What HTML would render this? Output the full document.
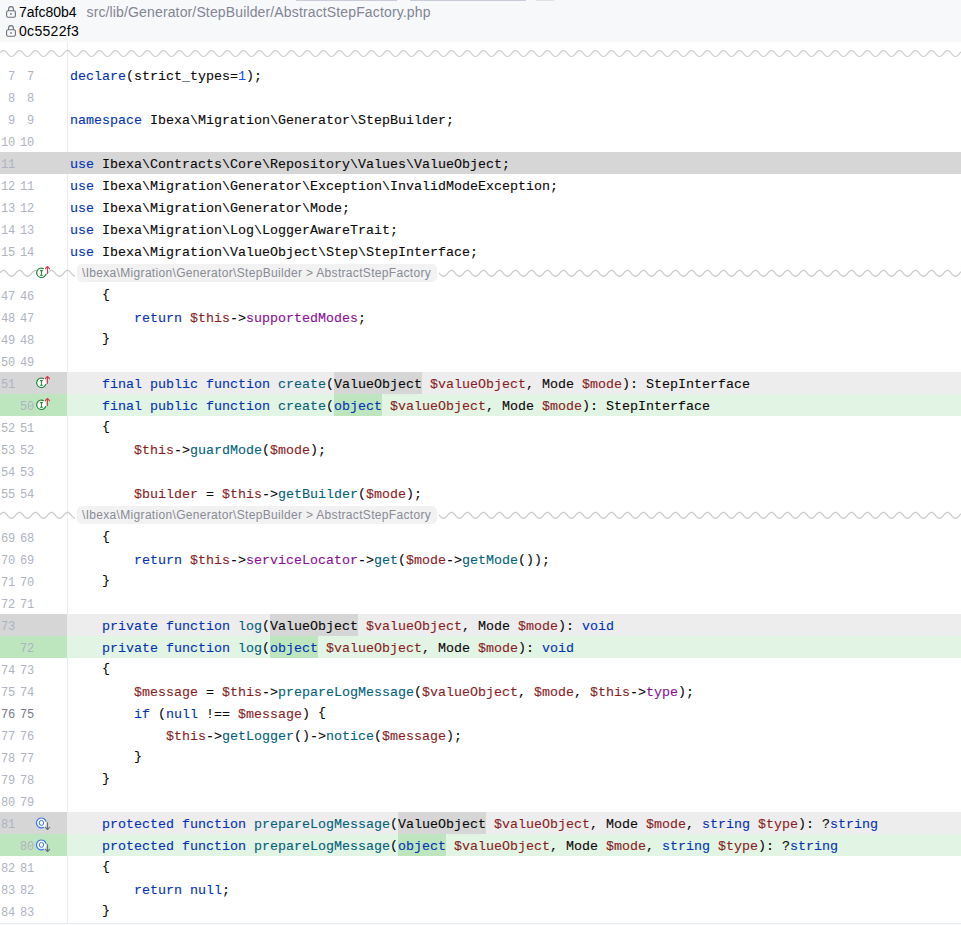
<!DOCTYPE html>
<html><head><meta charset="utf-8"><style>
*{box-sizing:border-box}
html,body{margin:0;padding:0;width:961px;height:925px;overflow:hidden;background:#fff}
body{position:relative;font-family:"Liberation Sans",sans-serif}
.hdr{position:absolute;left:0;top:0;width:961px;height:42px;background:#f7f8fa}
.bar{position:absolute;top:0;height:1px}
.lock{position:absolute;left:0}
.hash{position:absolute;left:19px;font-size:14px;color:#000;white-space:pre;line-height:18px}
.path{position:absolute;left:86.5px;top:3px;font-size:14px;color:#818594;letter-spacing:0.14px;white-space:pre;line-height:18px}
.gdiv{position:absolute;left:67px;top:42px;width:1px;height:881px;background:#ebecf0}
.bot{position:absolute;left:0;top:923px;width:961px;height:1px;background:#ebecf0}
.bot2{position:absolute;left:0;top:924px;width:961px;height:1px;background:#f7f8fa}
.wv{position:absolute;left:0;top:0}
.wv path{fill:none;stroke:#cbcbcb;stroke-width:1.2}
.lbl{position:absolute;left:77px;width:360px;height:18px;background:#f2f2f2;border-radius:5px;font-size:12px;color:#888b94;line-height:19px;padding-left:5px;letter-spacing:0.32px;white-space:pre}
.row{position:absolute;left:0;width:961px;height:22px}
.row.delfull{background:#d6d6d6}
.row.del{background:linear-gradient(to right,#d6d6d6 0,#d6d6d6 67px,#ededed 67px)}
.row.add{background:linear-gradient(to right,#bee6be 0,#bee6be 67px,#e2f4e3 67px)}
.ln{position:absolute;top:2px;font-family:"Liberation Mono",monospace;font-size:12px;letter-spacing:-0.2px;color:#aeb3c2;line-height:22px;width:14px;text-align:right;white-space:pre}
.l1{left:1px}
.l2{left:20px}
.ln.act{color:#767a8a}
.ic{position:absolute;left:32px;top:0}
.code{position:absolute;left:70px;top:2px;-webkit-text-stroke:0.1px currentColor;font-family:"Liberation Mono",monospace;font-size:13.333px;line-height:22px;color:#080808;white-space:pre}
.br{position:relative;top:-2px} .pa{position:relative;top:-1.5px}
.k{color:#0033b3} .f{color:#00627a} .fl{color:#871094} .v{color:#871e1e} .n{color:#1750eb}
.w{position:absolute;top:0;height:22px}
.del .w{background:#d6d6d6}
.add .w{background:#bee6be}
</style></head><body>
<div class="hdr">
<div class="bar" style="left:296px;width:101px;background:#c9ccd6"></div>
<div class="bar" style="left:410px;width:116px;background:#c9ccd6"></div>
<div class="bar" style="left:536px;width:18px;background:#dfe1e5"></div>
<div class="lock" style="top:0px"><svg width="20" height="20" viewBox="0 0 20 20"><path d="M8.6 11V9a2.4 2.4 0 0 1 4.8 0V11" fill="none" stroke="#6c707e" stroke-width="1.1"/><rect x="6.6" y="10.7" width="8.8" height="6.5" rx="1.5" fill="none" stroke="#6c707e" stroke-width="1.1"/><rect x="10.4" y="13" width="1.2" height="2" fill="#6c707e"/></svg></div>
<div class="hash" style="top:3px">7afc80b4</div>
<div class="path">src/lib/Generator/StepBuilder/AbstractStepFactory.php</div>
<div class="lock" style="top:19px"><svg width="20" height="20" viewBox="0 0 20 20"><path d="M8.6 11V9a2.4 2.4 0 0 1 4.8 0V11" fill="none" stroke="#6c707e" stroke-width="1.1"/><rect x="6.6" y="10.7" width="8.8" height="6.5" rx="1.5" fill="none" stroke="#6c707e" stroke-width="1.1"/><rect x="10.4" y="13" width="1.2" height="2" fill="#6c707e"/></svg></div>
<div class="hash" style="top:22px;letter-spacing:0.3px">0c5522f3</div>
</div>
<div class="gdiv"></div>
<div class="row" style="top:64px"><span class="ln l1">7</span><span class="ln l2">7</span><div class="code"><span class="k">declare</span><span class="pa">(</span>strict_types=<span class="n">1</span><span class="pa">)</span>;</div></div><div class="row" style="top:86px"><span class="ln l1">8</span><span class="ln l2">8</span><div class="code"></div></div><div class="row" style="top:108px"><span class="ln l1">9</span><span class="ln l2">9</span><div class="code"><span class="k">namespace</span> Ibexa\Migration\Generator\StepBuilder;</div></div><div class="row" style="top:130px"><span class="ln l1">10</span><span class="ln l2">10</span><div class="code"></div></div><div class="row delfull" style="top:152px"><span class="ln l1">11</span><span class="ln l2"></span><div class="code"><span class="k">use</span> Ibexa\Contracts\Core\Repository\Values\ValueObject;</div></div><div class="row" style="top:174px"><span class="ln l1">12</span><span class="ln l2">11</span><div class="code"><span class="k">use</span> Ibexa\Migration\Generator\Exception\InvalidModeException;</div></div><div class="row" style="top:196px"><span class="ln l1">13</span><span class="ln l2">12</span><div class="code"><span class="k">use</span> Ibexa\Migration\Generator\Mode;</div></div><div class="row" style="top:218px"><span class="ln l1">14</span><span class="ln l2">13</span><div class="code"><span class="k">use</span> Ibexa\Migration\Log\LoggerAwareTrait;</div></div><div class="row" style="top:240px"><span class="ln l1">15</span><span class="ln l2">14</span><div class="code"><span class="k">use</span> Ibexa\Migration\ValueObject\Step\StepInterface;</div></div><div class="row" style="top:284px"><span class="ln l1">47</span><span class="ln l2">46</span><div class="code">    <span class="br">{</span></div></div><div class="row" style="top:306px"><span class="ln l1">48</span><span class="ln l2">47</span><div class="code">        <span class="k">return</span> <span class="v">$this</span>-&gt;<span class="fl">supportedModes</span>;</div></div><div class="row" style="top:328px"><span class="ln l1">49</span><span class="ln l2">48</span><div class="code">    <span class="br">}</span></div></div><div class="row" style="top:350px"><span class="ln l1">50</span><span class="ln l2">49</span><div class="code"></div></div><div class="row del" style="top:372px"><span class="ln l1">51</span><span class="ln l2"></span><svg class="ic" width="20" height="22" viewBox="0 0 20 22"><circle cx="9.4" cy="10.8" r="4.7" fill="#fff" stroke="none"/><path d="M11.82 6.77A4.7 4.7 0 1 0 13.96 11.94" fill="none" stroke="#208a3c" stroke-width="1.15"/><path d="M8.1 8.65h2.7M8.1 13.25h2.7" stroke="#208a3c" stroke-width="1.15" fill="none"/><path d="M9.45 8.6v4.7" stroke="#208a3c" stroke-width="1.0" fill="none"/><path d="M15.45 4.6v7.3" stroke="#db3b4b" stroke-width="1.15" fill="none"/><path d="M13.4 6.7l2.05-2.2 2.05 2.2" stroke="#db3b4b" stroke-width="1.15" fill="none" stroke-linecap="round" stroke-linejoin="round"/></svg><div class="w" style="left:334px;width:88px"></div><div class="code">    <span class="k">final</span> <span class="k">public</span> <span class="k">function</span> <span class="f">create</span><span class="pa">(</span>ValueObject <span class="v">$valueObject</span>, Mode <span class="v">$mode</span><span class="pa">)</span>: StepInterface</div></div><div class="row add" style="top:394px"><span class="ln l1"></span><span class="ln l2">50</span><svg class="ic" width="20" height="22" viewBox="0 0 20 22"><circle cx="9.4" cy="10.8" r="4.7" fill="#fff" stroke="none"/><path d="M11.82 6.77A4.7 4.7 0 1 0 13.96 11.94" fill="none" stroke="#208a3c" stroke-width="1.15"/><path d="M8.1 8.65h2.7M8.1 13.25h2.7" stroke="#208a3c" stroke-width="1.15" fill="none"/><path d="M9.45 8.6v4.7" stroke="#208a3c" stroke-width="1.0" fill="none"/><path d="M15.45 4.6v7.3" stroke="#db3b4b" stroke-width="1.15" fill="none"/><path d="M13.4 6.7l2.05-2.2 2.05 2.2" stroke="#db3b4b" stroke-width="1.15" fill="none" stroke-linecap="round" stroke-linejoin="round"/></svg><div class="w" style="left:334px;width:48px"></div><div class="code">    <span class="k">final</span> <span class="k">public</span> <span class="k">function</span> <span class="f">create</span><span class="pa">(</span><span class="k">object</span> <span class="v">$valueObject</span>, Mode <span class="v">$mode</span><span class="pa">)</span>: StepInterface</div></div><div class="row" style="top:416px"><span class="ln l1">52</span><span class="ln l2">51</span><div class="code">    <span class="br">{</span></div></div><div class="row" style="top:438px"><span class="ln l1">53</span><span class="ln l2">52</span><div class="code">        <span class="v">$this</span>-&gt;<span class="f">guardMode</span><span class="pa">(</span><span class="v">$mode</span><span class="pa">)</span>;</div></div><div class="row" style="top:460px"><span class="ln l1">54</span><span class="ln l2">53</span><div class="code"></div></div><div class="row" style="top:482px"><span class="ln l1">55</span><span class="ln l2">54</span><div class="code">        <span class="v">$builder</span> = <span class="v">$this</span>-&gt;<span class="f">getBuilder</span><span class="pa">(</span><span class="v">$mode</span><span class="pa">)</span>;</div></div><div class="row" style="top:526px"><span class="ln l1">69</span><span class="ln l2">68</span><div class="code">    <span class="br">{</span></div></div><div class="row" style="top:548px"><span class="ln l1">70</span><span class="ln l2">69</span><div class="code">        <span class="k">return</span> <span class="v">$this</span>-&gt;<span class="fl">serviceLocator</span>-&gt;<span class="f">get</span><span class="pa">(</span><span class="v">$mode</span>-&gt;<span class="f">getMode</span><span class="pa">(</span><span class="pa">)</span><span class="pa">)</span>;</div></div><div class="row" style="top:570px"><span class="ln l1">71</span><span class="ln l2">70</span><div class="code">    <span class="br">}</span></div></div><div class="row" style="top:592px"><span class="ln l1">72</span><span class="ln l2">71</span><div class="code"></div></div><div class="row del" style="top:614px"><span class="ln l1">73</span><span class="ln l2"></span><div class="w" style="left:270px;width:88px"></div><div class="code">    <span class="k">private</span> <span class="k">function</span> <span class="f">log</span><span class="pa">(</span>ValueObject <span class="v">$valueObject</span>, Mode <span class="v">$mode</span><span class="pa">)</span>: <span class="k">void</span></div></div><div class="row add" style="top:636px"><span class="ln l1"></span><span class="ln l2">72</span><div class="w" style="left:270px;width:48px"></div><div class="code">    <span class="k">private</span> <span class="k">function</span> <span class="f">log</span><span class="pa">(</span><span class="k">object</span> <span class="v">$valueObject</span>, Mode <span class="v">$mode</span><span class="pa">)</span>: <span class="k">void</span></div></div><div class="row" style="top:658px"><span class="ln l1">74</span><span class="ln l2">73</span><div class="code">    <span class="br">{</span></div></div><div class="row" style="top:680px"><span class="ln l1">75</span><span class="ln l2">74</span><div class="code">        <span class="v">$message</span> = <span class="v">$this</span>-&gt;<span class="f">prepareLogMessage</span><span class="pa">(</span><span class="v">$valueObject</span>, <span class="v">$mode</span>, <span class="v">$this</span>-&gt;<span class="fl">type</span><span class="pa">)</span>;</div></div><div class="row" style="top:702px"><span class="ln l1 act">76</span><span class="ln l2 act">75</span><div class="code">        <span class="k">if</span> <span class="pa">(</span><span class="k">null</span> !== <span class="v">$message</span><span class="pa">)</span> <span class="br">{</span></div></div><div class="row" style="top:724px"><span class="ln l1">77</span><span class="ln l2">76</span><div class="code">            <span class="v">$this</span>-&gt;<span class="f">getLogger</span><span class="pa">(</span><span class="pa">)</span>-&gt;<span class="f">notice</span><span class="pa">(</span><span class="v">$message</span><span class="pa">)</span>;</div></div><div class="row" style="top:746px"><span class="ln l1">78</span><span class="ln l2">77</span><div class="code">        <span class="br">}</span></div></div><div class="row" style="top:768px"><span class="ln l1">79</span><span class="ln l2">78</span><div class="code">    <span class="br">}</span></div></div><div class="row" style="top:790px"><span class="ln l1">80</span><span class="ln l2">79</span><div class="code"></div></div><div class="row del" style="top:812px"><span class="ln l1">81</span><span class="ln l2"></span><svg class="ic" width="20" height="22" viewBox="0 0 20 22"><circle cx="9.35" cy="10.9" r="4.9" fill="#fff" stroke="none"/><path d="M14.10 9.71A4.9 4.9 0 1 0 11.8 15.14" fill="none" stroke="#3574f0" stroke-width="1.2"/><ellipse cx="9.45" cy="10.9" rx="2.15" ry="2.45" fill="#fff" stroke="#3574f0" stroke-width="1.0"/><path d="M15.5 10.2v7.4" stroke="#6c707e" stroke-width="1.15" fill="none"/><path d="M13.4 15.4l2.1 2.1 2.1-2.1" stroke="#6c707e" stroke-width="1.15" fill="none" stroke-linecap="round" stroke-linejoin="round"/></svg><div class="w" style="left:398px;width:88px"></div><div class="code">    <span class="k">protected</span> <span class="k">function</span> <span class="f">prepareLogMessage</span><span class="pa">(</span>ValueObject <span class="v">$valueObject</span>, Mode <span class="v">$mode</span>, <span class="k">string</span> <span class="v">$type</span><span class="pa">)</span>: ?<span class="k">string</span></div></div><div class="row add" style="top:834px"><span class="ln l1"></span><span class="ln l2">80</span><svg class="ic" width="20" height="22" viewBox="0 0 20 22"><circle cx="9.35" cy="10.9" r="4.9" fill="#fff" stroke="none"/><path d="M14.10 9.71A4.9 4.9 0 1 0 11.8 15.14" fill="none" stroke="#3574f0" stroke-width="1.2"/><ellipse cx="9.45" cy="10.9" rx="2.15" ry="2.45" fill="#fff" stroke="#3574f0" stroke-width="1.0"/><path d="M15.5 10.2v7.4" stroke="#6c707e" stroke-width="1.15" fill="none"/><path d="M13.4 15.4l2.1 2.1 2.1-2.1" stroke="#6c707e" stroke-width="1.15" fill="none" stroke-linecap="round" stroke-linejoin="round"/></svg><div class="w" style="left:398px;width:48px"></div><div class="code">    <span class="k">protected</span> <span class="k">function</span> <span class="f">prepareLogMessage</span><span class="pa">(</span><span class="k">object</span> <span class="v">$valueObject</span>, Mode <span class="v">$mode</span>, <span class="k">string</span> <span class="v">$type</span><span class="pa">)</span>: ?<span class="k">string</span></div></div><div class="row" style="top:856px"><span class="ln l1">82</span><span class="ln l2">81</span><div class="code">    <span class="br">{</span></div></div><div class="row" style="top:878px"><span class="ln l1">83</span><span class="ln l2">82</span><div class="code">        <span class="k">return</span> <span class="k">null</span>;</div></div><div class="row" style="top:900px"><span class="ln l1">84</span><span class="ln l2">83</span><div class="code">    <span class="br">}</span></div></div>
<svg class="wv" width="961" height="925" viewBox="0 0 961 925"><path d="M0.0,52.91L0.5,52.35L1.0,51.83L1.5,51.38L2.0,51.01L2.5,50.73L3.0,50.56L3.5,50.50L4.0,50.56L4.5,50.73L5.0,51.01L5.5,51.38L6.0,51.83L6.5,52.35L7.0,52.91L7.5,53.50L8.0,54.09L8.5,54.65L9.0,55.17L9.5,55.62L10.0,55.99L10.5,56.27L11.0,56.44L11.5,56.50L12.0,56.44L12.5,56.27L13.0,55.99L13.5,55.62L14.0,55.17L14.5,54.65L15.0,54.09L15.5,53.50L16.0,52.91L16.5,52.35L17.0,51.83L17.5,51.38L18.0,51.01L18.5,50.73L19.0,50.56L19.5,50.50L20.0,50.56L20.5,50.73L21.0,51.01L21.5,51.38L22.0,51.83L22.5,52.35L23.0,52.91L23.5,53.50L24.0,54.09L24.5,54.65L25.0,55.17L25.5,55.62L26.0,55.99L26.5,56.27L27.0,56.44L27.5,56.50L28.0,56.44L28.5,56.27L29.0,55.99L29.5,55.62L30.0,55.17L30.5,54.65L31.0,54.09L31.5,53.50L32.0,52.91L32.5,52.35L33.0,51.83L33.5,51.38L34.0,51.01L34.5,50.73L35.0,50.56L35.5,50.50L36.0,50.56L36.5,50.73L37.0,51.01L37.5,51.38L38.0,51.83L38.5,52.35L39.0,52.91L39.5,53.50L40.0,54.09L40.5,54.65L41.0,55.17L41.5,55.62L42.0,55.99L42.5,56.27L43.0,56.44L43.5,56.50L44.0,56.44L44.5,56.27L45.0,55.99L45.5,55.62L46.0,55.17L46.5,54.65L47.0,54.09L47.5,53.50L48.0,52.91L48.5,52.35L49.0,51.83L49.5,51.38L50.0,51.01L50.5,50.73L51.0,50.56L51.5,50.50L52.0,50.56L52.5,50.73L53.0,51.01L53.5,51.38L54.0,51.83L54.5,52.35L55.0,52.91L55.5,53.50L56.0,54.09L56.5,54.65L57.0,55.17L57.5,55.62L58.0,55.99L58.5,56.27L59.0,56.44L59.5,56.50L60.0,56.44L60.5,56.27L61.0,55.99L61.5,55.62L62.0,55.17L62.5,54.65L63.0,54.09L63.5,53.50L64.0,52.91L64.5,52.35L65.0,51.83L65.5,51.38L66.0,51.01L66.5,50.73L67.0,50.56L67.5,50.50L68.0,50.56L68.5,50.73L69.0,51.01L69.5,51.38L70.0,51.83L70.5,52.35L71.0,52.91L71.5,53.50L72.0,54.09L72.5,54.65L73.0,55.17L73.5,55.62L74.0,55.99L74.5,56.27L75.0,56.44L75.5,56.50L76.0,56.44L76.5,56.27L77.0,55.99L77.5,55.62L78.0,55.17L78.5,54.65L79.0,54.09L79.5,53.50L80.0,52.91L80.5,52.35L81.0,51.83L81.5,51.38L82.0,51.01L82.5,50.73L83.0,50.56L83.5,50.50L84.0,50.56L84.5,50.73L85.0,51.01L85.5,51.38L86.0,51.83L86.5,52.35L87.0,52.91L87.5,53.50L88.0,54.09L88.5,54.65L89.0,55.17L89.5,55.62L90.0,55.99L90.5,56.27L91.0,56.44L91.5,56.50L92.0,56.44L92.5,56.27L93.0,55.99L93.5,55.62L94.0,55.17L94.5,54.65L95.0,54.09L95.5,53.50L96.0,52.91L96.5,52.35L97.0,51.83L97.5,51.38L98.0,51.01L98.5,50.73L99.0,50.56L99.5,50.50L100.0,50.56L100.5,50.73L101.0,51.01L101.5,51.38L102.0,51.83L102.5,52.35L103.0,52.91L103.5,53.50L104.0,54.09L104.5,54.65L105.0,55.17L105.5,55.62L106.0,55.99L106.5,56.27L107.0,56.44L107.5,56.50L108.0,56.44L108.5,56.27L109.0,55.99L109.5,55.62L110.0,55.17L110.5,54.65L111.0,54.09L111.5,53.50L112.0,52.91L112.5,52.35L113.0,51.83L113.5,51.38L114.0,51.01L114.5,50.73L115.0,50.56L115.5,50.50L116.0,50.56L116.5,50.73L117.0,51.01L117.5,51.38L118.0,51.83L118.5,52.35L119.0,52.91L119.5,53.50L120.0,54.09L120.5,54.65L121.0,55.17L121.5,55.62L122.0,55.99L122.5,56.27L123.0,56.44L123.5,56.50L124.0,56.44L124.5,56.27L125.0,55.99L125.5,55.62L126.0,55.17L126.5,54.65L127.0,54.09L127.5,53.50L128.0,52.91L128.5,52.35L129.0,51.83L129.5,51.38L130.0,51.01L130.5,50.73L131.0,50.56L131.5,50.50L132.0,50.56L132.5,50.73L133.0,51.01L133.5,51.38L134.0,51.83L134.5,52.35L135.0,52.91L135.5,53.50L136.0,54.09L136.5,54.65L137.0,55.17L137.5,55.62L138.0,55.99L138.5,56.27L139.0,56.44L139.5,56.50L140.0,56.44L140.5,56.27L141.0,55.99L141.5,55.62L142.0,55.17L142.5,54.65L143.0,54.09L143.5,53.50L144.0,52.91L144.5,52.35L145.0,51.83L145.5,51.38L146.0,51.01L146.5,50.73L147.0,50.56L147.5,50.50L148.0,50.56L148.5,50.73L149.0,51.01L149.5,51.38L150.0,51.83L150.5,52.35L151.0,52.91L151.5,53.50L152.0,54.09L152.5,54.65L153.0,55.17L153.5,55.62L154.0,55.99L154.5,56.27L155.0,56.44L155.5,56.50L156.0,56.44L156.5,56.27L157.0,55.99L157.5,55.62L158.0,55.17L158.5,54.65L159.0,54.09L159.5,53.50L160.0,52.91L160.5,52.35L161.0,51.83L161.5,51.38L162.0,51.01L162.5,50.73L163.0,50.56L163.5,50.50L164.0,50.56L164.5,50.73L165.0,51.01L165.5,51.38L166.0,51.83L166.5,52.35L167.0,52.91L167.5,53.50L168.0,54.09L168.5,54.65L169.0,55.17L169.5,55.62L170.0,55.99L170.5,56.27L171.0,56.44L171.5,56.50L172.0,56.44L172.5,56.27L173.0,55.99L173.5,55.62L174.0,55.17L174.5,54.65L175.0,54.09L175.5,53.50L176.0,52.91L176.5,52.35L177.0,51.83L177.5,51.38L178.0,51.01L178.5,50.73L179.0,50.56L179.5,50.50L180.0,50.56L180.5,50.73L181.0,51.01L181.5,51.38L182.0,51.83L182.5,52.35L183.0,52.91L183.5,53.50L184.0,54.09L184.5,54.65L185.0,55.17L185.5,55.62L186.0,55.99L186.5,56.27L187.0,56.44L187.5,56.50L188.0,56.44L188.5,56.27L189.0,55.99L189.5,55.62L190.0,55.17L190.5,54.65L191.0,54.09L191.5,53.50L192.0,52.91L192.5,52.35L193.0,51.83L193.5,51.38L194.0,51.01L194.5,50.73L195.0,50.56L195.5,50.50L196.0,50.56L196.5,50.73L197.0,51.01L197.5,51.38L198.0,51.83L198.5,52.35L199.0,52.91L199.5,53.50L200.0,54.09L200.5,54.65L201.0,55.17L201.5,55.62L202.0,55.99L202.5,56.27L203.0,56.44L203.5,56.50L204.0,56.44L204.5,56.27L205.0,55.99L205.5,55.62L206.0,55.17L206.5,54.65L207.0,54.09L207.5,53.50L208.0,52.91L208.5,52.35L209.0,51.83L209.5,51.38L210.0,51.01L210.5,50.73L211.0,50.56L211.5,50.50L212.0,50.56L212.5,50.73L213.0,51.01L213.5,51.38L214.0,51.83L214.5,52.35L215.0,52.91L215.5,53.50L216.0,54.09L216.5,54.65L217.0,55.17L217.5,55.62L218.0,55.99L218.5,56.27L219.0,56.44L219.5,56.50L220.0,56.44L220.5,56.27L221.0,55.99L221.5,55.62L222.0,55.17L222.5,54.65L223.0,54.09L223.5,53.50L224.0,52.91L224.5,52.35L225.0,51.83L225.5,51.38L226.0,51.01L226.5,50.73L227.0,50.56L227.5,50.50L228.0,50.56L228.5,50.73L229.0,51.01L229.5,51.38L230.0,51.83L230.5,52.35L231.0,52.91L231.5,53.50L232.0,54.09L232.5,54.65L233.0,55.17L233.5,55.62L234.0,55.99L234.5,56.27L235.0,56.44L235.5,56.50L236.0,56.44L236.5,56.27L237.0,55.99L237.5,55.62L238.0,55.17L238.5,54.65L239.0,54.09L239.5,53.50L240.0,52.91L240.5,52.35L241.0,51.83L241.5,51.38L242.0,51.01L242.5,50.73L243.0,50.56L243.5,50.50L244.0,50.56L244.5,50.73L245.0,51.01L245.5,51.38L246.0,51.83L246.5,52.35L247.0,52.91L247.5,53.50L248.0,54.09L248.5,54.65L249.0,55.17L249.5,55.62L250.0,55.99L250.5,56.27L251.0,56.44L251.5,56.50L252.0,56.44L252.5,56.27L253.0,55.99L253.5,55.62L254.0,55.17L254.5,54.65L255.0,54.09L255.5,53.50L256.0,52.91L256.5,52.35L257.0,51.83L257.5,51.38L258.0,51.01L258.5,50.73L259.0,50.56L259.5,50.50L260.0,50.56L260.5,50.73L261.0,51.01L261.5,51.38L262.0,51.83L262.5,52.35L263.0,52.91L263.5,53.50L264.0,54.09L264.5,54.65L265.0,55.17L265.5,55.62L266.0,55.99L266.5,56.27L267.0,56.44L267.5,56.50L268.0,56.44L268.5,56.27L269.0,55.99L269.5,55.62L270.0,55.17L270.5,54.65L271.0,54.09L271.5,53.50L272.0,52.91L272.5,52.35L273.0,51.83L273.5,51.38L274.0,51.01L274.5,50.73L275.0,50.56L275.5,50.50L276.0,50.56L276.5,50.73L277.0,51.01L277.5,51.38L278.0,51.83L278.5,52.35L279.0,52.91L279.5,53.50L280.0,54.09L280.5,54.65L281.0,55.17L281.5,55.62L282.0,55.99L282.5,56.27L283.0,56.44L283.5,56.50L284.0,56.44L284.5,56.27L285.0,55.99L285.5,55.62L286.0,55.17L286.5,54.65L287.0,54.09L287.5,53.50L288.0,52.91L288.5,52.35L289.0,51.83L289.5,51.38L290.0,51.01L290.5,50.73L291.0,50.56L291.5,50.50L292.0,50.56L292.5,50.73L293.0,51.01L293.5,51.38L294.0,51.83L294.5,52.35L295.0,52.91L295.5,53.50L296.0,54.09L296.5,54.65L297.0,55.17L297.5,55.62L298.0,55.99L298.5,56.27L299.0,56.44L299.5,56.50L300.0,56.44L300.5,56.27L301.0,55.99L301.5,55.62L302.0,55.17L302.5,54.65L303.0,54.09L303.5,53.50L304.0,52.91L304.5,52.35L305.0,51.83L305.5,51.38L306.0,51.01L306.5,50.73L307.0,50.56L307.5,50.50L308.0,50.56L308.5,50.73L309.0,51.01L309.5,51.38L310.0,51.83L310.5,52.35L311.0,52.91L311.5,53.50L312.0,54.09L312.5,54.65L313.0,55.17L313.5,55.62L314.0,55.99L314.5,56.27L315.0,56.44L315.5,56.50L316.0,56.44L316.5,56.27L317.0,55.99L317.5,55.62L318.0,55.17L318.5,54.65L319.0,54.09L319.5,53.50L320.0,52.91L320.5,52.35L321.0,51.83L321.5,51.38L322.0,51.01L322.5,50.73L323.0,50.56L323.5,50.50L324.0,50.56L324.5,50.73L325.0,51.01L325.5,51.38L326.0,51.83L326.5,52.35L327.0,52.91L327.5,53.50L328.0,54.09L328.5,54.65L329.0,55.17L329.5,55.62L330.0,55.99L330.5,56.27L331.0,56.44L331.5,56.50L332.0,56.44L332.5,56.27L333.0,55.99L333.5,55.62L334.0,55.17L334.5,54.65L335.0,54.09L335.5,53.50L336.0,52.91L336.5,52.35L337.0,51.83L337.5,51.38L338.0,51.01L338.5,50.73L339.0,50.56L339.5,50.50L340.0,50.56L340.5,50.73L341.0,51.01L341.5,51.38L342.0,51.83L342.5,52.35L343.0,52.91L343.5,53.50L344.0,54.09L344.5,54.65L345.0,55.17L345.5,55.62L346.0,55.99L346.5,56.27L347.0,56.44L347.5,56.50L348.0,56.44L348.5,56.27L349.0,55.99L349.5,55.62L350.0,55.17L350.5,54.65L351.0,54.09L351.5,53.50L352.0,52.91L352.5,52.35L353.0,51.83L353.5,51.38L354.0,51.01L354.5,50.73L355.0,50.56L355.5,50.50L356.0,50.56L356.5,50.73L357.0,51.01L357.5,51.38L358.0,51.83L358.5,52.35L359.0,52.91L359.5,53.50L360.0,54.09L360.5,54.65L361.0,55.17L361.5,55.62L362.0,55.99L362.5,56.27L363.0,56.44L363.5,56.50L364.0,56.44L364.5,56.27L365.0,55.99L365.5,55.62L366.0,55.17L366.5,54.65L367.0,54.09L367.5,53.50L368.0,52.91L368.5,52.35L369.0,51.83L369.5,51.38L370.0,51.01L370.5,50.73L371.0,50.56L371.5,50.50L372.0,50.56L372.5,50.73L373.0,51.01L373.5,51.38L374.0,51.83L374.5,52.35L375.0,52.91L375.5,53.50L376.0,54.09L376.5,54.65L377.0,55.17L377.5,55.62L378.0,55.99L378.5,56.27L379.0,56.44L379.5,56.50L380.0,56.44L380.5,56.27L381.0,55.99L381.5,55.62L382.0,55.17L382.5,54.65L383.0,54.09L383.5,53.50L384.0,52.91L384.5,52.35L385.0,51.83L385.5,51.38L386.0,51.01L386.5,50.73L387.0,50.56L387.5,50.50L388.0,50.56L388.5,50.73L389.0,51.01L389.5,51.38L390.0,51.83L390.5,52.35L391.0,52.91L391.5,53.50L392.0,54.09L392.5,54.65L393.0,55.17L393.5,55.62L394.0,55.99L394.5,56.27L395.0,56.44L395.5,56.50L396.0,56.44L396.5,56.27L397.0,55.99L397.5,55.62L398.0,55.17L398.5,54.65L399.0,54.09L399.5,53.50L400.0,52.91L400.5,52.35L401.0,51.83L401.5,51.38L402.0,51.01L402.5,50.73L403.0,50.56L403.5,50.50L404.0,50.56L404.5,50.73L405.0,51.01L405.5,51.38L406.0,51.83L406.5,52.35L407.0,52.91L407.5,53.50L408.0,54.09L408.5,54.65L409.0,55.17L409.5,55.62L410.0,55.99L410.5,56.27L411.0,56.44L411.5,56.50L412.0,56.44L412.5,56.27L413.0,55.99L413.5,55.62L414.0,55.17L414.5,54.65L415.0,54.09L415.5,53.50L416.0,52.91L416.5,52.35L417.0,51.83L417.5,51.38L418.0,51.01L418.5,50.73L419.0,50.56L419.5,50.50L420.0,50.56L420.5,50.73L421.0,51.01L421.5,51.38L422.0,51.83L422.5,52.35L423.0,52.91L423.5,53.50L424.0,54.09L424.5,54.65L425.0,55.17L425.5,55.62L426.0,55.99L426.5,56.27L427.0,56.44L427.5,56.50L428.0,56.44L428.5,56.27L429.0,55.99L429.5,55.62L430.0,55.17L430.5,54.65L431.0,54.09L431.5,53.50L432.0,52.91L432.5,52.35L433.0,51.83L433.5,51.38L434.0,51.01L434.5,50.73L435.0,50.56L435.5,50.50L436.0,50.56L436.5,50.73L437.0,51.01L437.5,51.38L438.0,51.83L438.5,52.35L439.0,52.91L439.5,53.50L440.0,54.09L440.5,54.65L441.0,55.17L441.5,55.62L442.0,55.99L442.5,56.27L443.0,56.44L443.5,56.50L444.0,56.44L444.5,56.27L445.0,55.99L445.5,55.62L446.0,55.17L446.5,54.65L447.0,54.09L447.5,53.50L448.0,52.91L448.5,52.35L449.0,51.83L449.5,51.38L450.0,51.01L450.5,50.73L451.0,50.56L451.5,50.50L452.0,50.56L452.5,50.73L453.0,51.01L453.5,51.38L454.0,51.83L454.5,52.35L455.0,52.91L455.5,53.50L456.0,54.09L456.5,54.65L457.0,55.17L457.5,55.62L458.0,55.99L458.5,56.27L459.0,56.44L459.5,56.50L460.0,56.44L460.5,56.27L461.0,55.99L461.5,55.62L462.0,55.17L462.5,54.65L463.0,54.09L463.5,53.50L464.0,52.91L464.5,52.35L465.0,51.83L465.5,51.38L466.0,51.01L466.5,50.73L467.0,50.56L467.5,50.50L468.0,50.56L468.5,50.73L469.0,51.01L469.5,51.38L470.0,51.83L470.5,52.35L471.0,52.91L471.5,53.50L472.0,54.09L472.5,54.65L473.0,55.17L473.5,55.62L474.0,55.99L474.5,56.27L475.0,56.44L475.5,56.50L476.0,56.44L476.5,56.27L477.0,55.99L477.5,55.62L478.0,55.17L478.5,54.65L479.0,54.09L479.5,53.50L480.0,52.91L480.5,52.35L481.0,51.83L481.5,51.38L482.0,51.01L482.5,50.73L483.0,50.56L483.5,50.50L484.0,50.56L484.5,50.73L485.0,51.01L485.5,51.38L486.0,51.83L486.5,52.35L487.0,52.91L487.5,53.50L488.0,54.09L488.5,54.65L489.0,55.17L489.5,55.62L490.0,55.99L490.5,56.27L491.0,56.44L491.5,56.50L492.0,56.44L492.5,56.27L493.0,55.99L493.5,55.62L494.0,55.17L494.5,54.65L495.0,54.09L495.5,53.50L496.0,52.91L496.5,52.35L497.0,51.83L497.5,51.38L498.0,51.01L498.5,50.73L499.0,50.56L499.5,50.50L500.0,50.56L500.5,50.73L501.0,51.01L501.5,51.38L502.0,51.83L502.5,52.35L503.0,52.91L503.5,53.50L504.0,54.09L504.5,54.65L505.0,55.17L505.5,55.62L506.0,55.99L506.5,56.27L507.0,56.44L507.5,56.50L508.0,56.44L508.5,56.27L509.0,55.99L509.5,55.62L510.0,55.17L510.5,54.65L511.0,54.09L511.5,53.50L512.0,52.91L512.5,52.35L513.0,51.83L513.5,51.38L514.0,51.01L514.5,50.73L515.0,50.56L515.5,50.50L516.0,50.56L516.5,50.73L517.0,51.01L517.5,51.38L518.0,51.83L518.5,52.35L519.0,52.91L519.5,53.50L520.0,54.09L520.5,54.65L521.0,55.17L521.5,55.62L522.0,55.99L522.5,56.27L523.0,56.44L523.5,56.50L524.0,56.44L524.5,56.27L525.0,55.99L525.5,55.62L526.0,55.17L526.5,54.65L527.0,54.09L527.5,53.50L528.0,52.91L528.5,52.35L529.0,51.83L529.5,51.38L530.0,51.01L530.5,50.73L531.0,50.56L531.5,50.50L532.0,50.56L532.5,50.73L533.0,51.01L533.5,51.38L534.0,51.83L534.5,52.35L535.0,52.91L535.5,53.50L536.0,54.09L536.5,54.65L537.0,55.17L537.5,55.62L538.0,55.99L538.5,56.27L539.0,56.44L539.5,56.50L540.0,56.44L540.5,56.27L541.0,55.99L541.5,55.62L542.0,55.17L542.5,54.65L543.0,54.09L543.5,53.50L544.0,52.91L544.5,52.35L545.0,51.83L545.5,51.38L546.0,51.01L546.5,50.73L547.0,50.56L547.5,50.50L548.0,50.56L548.5,50.73L549.0,51.01L549.5,51.38L550.0,51.83L550.5,52.35L551.0,52.91L551.5,53.50L552.0,54.09L552.5,54.65L553.0,55.17L553.5,55.62L554.0,55.99L554.5,56.27L555.0,56.44L555.5,56.50L556.0,56.44L556.5,56.27L557.0,55.99L557.5,55.62L558.0,55.17L558.5,54.65L559.0,54.09L559.5,53.50L560.0,52.91L560.5,52.35L561.0,51.83L561.5,51.38L562.0,51.01L562.5,50.73L563.0,50.56L563.5,50.50L564.0,50.56L564.5,50.73L565.0,51.01L565.5,51.38L566.0,51.83L566.5,52.35L567.0,52.91L567.5,53.50L568.0,54.09L568.5,54.65L569.0,55.17L569.5,55.62L570.0,55.99L570.5,56.27L571.0,56.44L571.5,56.50L572.0,56.44L572.5,56.27L573.0,55.99L573.5,55.62L574.0,55.17L574.5,54.65L575.0,54.09L575.5,53.50L576.0,52.91L576.5,52.35L577.0,51.83L577.5,51.38L578.0,51.01L578.5,50.73L579.0,50.56L579.5,50.50L580.0,50.56L580.5,50.73L581.0,51.01L581.5,51.38L582.0,51.83L582.5,52.35L583.0,52.91L583.5,53.50L584.0,54.09L584.5,54.65L585.0,55.17L585.5,55.62L586.0,55.99L586.5,56.27L587.0,56.44L587.5,56.50L588.0,56.44L588.5,56.27L589.0,55.99L589.5,55.62L590.0,55.17L590.5,54.65L591.0,54.09L591.5,53.50L592.0,52.91L592.5,52.35L593.0,51.83L593.5,51.38L594.0,51.01L594.5,50.73L595.0,50.56L595.5,50.50L596.0,50.56L596.5,50.73L597.0,51.01L597.5,51.38L598.0,51.83L598.5,52.35L599.0,52.91L599.5,53.50L600.0,54.09L600.5,54.65L601.0,55.17L601.5,55.62L602.0,55.99L602.5,56.27L603.0,56.44L603.5,56.50L604.0,56.44L604.5,56.27L605.0,55.99L605.5,55.62L606.0,55.17L606.5,54.65L607.0,54.09L607.5,53.50L608.0,52.91L608.5,52.35L609.0,51.83L609.5,51.38L610.0,51.01L610.5,50.73L611.0,50.56L611.5,50.50L612.0,50.56L612.5,50.73L613.0,51.01L613.5,51.38L614.0,51.83L614.5,52.35L615.0,52.91L615.5,53.50L616.0,54.09L616.5,54.65L617.0,55.17L617.5,55.62L618.0,55.99L618.5,56.27L619.0,56.44L619.5,56.50L620.0,56.44L620.5,56.27L621.0,55.99L621.5,55.62L622.0,55.17L622.5,54.65L623.0,54.09L623.5,53.50L624.0,52.91L624.5,52.35L625.0,51.83L625.5,51.38L626.0,51.01L626.5,50.73L627.0,50.56L627.5,50.50L628.0,50.56L628.5,50.73L629.0,51.01L629.5,51.38L630.0,51.83L630.5,52.35L631.0,52.91L631.5,53.50L632.0,54.09L632.5,54.65L633.0,55.17L633.5,55.62L634.0,55.99L634.5,56.27L635.0,56.44L635.5,56.50L636.0,56.44L636.5,56.27L637.0,55.99L637.5,55.62L638.0,55.17L638.5,54.65L639.0,54.09L639.5,53.50L640.0,52.91L640.5,52.35L641.0,51.83L641.5,51.38L642.0,51.01L642.5,50.73L643.0,50.56L643.5,50.50L644.0,50.56L644.5,50.73L645.0,51.01L645.5,51.38L646.0,51.83L646.5,52.35L647.0,52.91L647.5,53.50L648.0,54.09L648.5,54.65L649.0,55.17L649.5,55.62L650.0,55.99L650.5,56.27L651.0,56.44L651.5,56.50L652.0,56.44L652.5,56.27L653.0,55.99L653.5,55.62L654.0,55.17L654.5,54.65L655.0,54.09L655.5,53.50L656.0,52.91L656.5,52.35L657.0,51.83L657.5,51.38L658.0,51.01L658.5,50.73L659.0,50.56L659.5,50.50L660.0,50.56L660.5,50.73L661.0,51.01L661.5,51.38L662.0,51.83L662.5,52.35L663.0,52.91L663.5,53.50L664.0,54.09L664.5,54.65L665.0,55.17L665.5,55.62L666.0,55.99L666.5,56.27L667.0,56.44L667.5,56.50L668.0,56.44L668.5,56.27L669.0,55.99L669.5,55.62L670.0,55.17L670.5,54.65L671.0,54.09L671.5,53.50L672.0,52.91L672.5,52.35L673.0,51.83L673.5,51.38L674.0,51.01L674.5,50.73L675.0,50.56L675.5,50.50L676.0,50.56L676.5,50.73L677.0,51.01L677.5,51.38L678.0,51.83L678.5,52.35L679.0,52.91L679.5,53.50L680.0,54.09L680.5,54.65L681.0,55.17L681.5,55.62L682.0,55.99L682.5,56.27L683.0,56.44L683.5,56.50L684.0,56.44L684.5,56.27L685.0,55.99L685.5,55.62L686.0,55.17L686.5,54.65L687.0,54.09L687.5,53.50L688.0,52.91L688.5,52.35L689.0,51.83L689.5,51.38L690.0,51.01L690.5,50.73L691.0,50.56L691.5,50.50L692.0,50.56L692.5,50.73L693.0,51.01L693.5,51.38L694.0,51.83L694.5,52.35L695.0,52.91L695.5,53.50L696.0,54.09L696.5,54.65L697.0,55.17L697.5,55.62L698.0,55.99L698.5,56.27L699.0,56.44L699.5,56.50L700.0,56.44L700.5,56.27L701.0,55.99L701.5,55.62L702.0,55.17L702.5,54.65L703.0,54.09L703.5,53.50L704.0,52.91L704.5,52.35L705.0,51.83L705.5,51.38L706.0,51.01L706.5,50.73L707.0,50.56L707.5,50.50L708.0,50.56L708.5,50.73L709.0,51.01L709.5,51.38L710.0,51.83L710.5,52.35L711.0,52.91L711.5,53.50L712.0,54.09L712.5,54.65L713.0,55.17L713.5,55.62L714.0,55.99L714.5,56.27L715.0,56.44L715.5,56.50L716.0,56.44L716.5,56.27L717.0,55.99L717.5,55.62L718.0,55.17L718.5,54.65L719.0,54.09L719.5,53.50L720.0,52.91L720.5,52.35L721.0,51.83L721.5,51.38L722.0,51.01L722.5,50.73L723.0,50.56L723.5,50.50L724.0,50.56L724.5,50.73L725.0,51.01L725.5,51.38L726.0,51.83L726.5,52.35L727.0,52.91L727.5,53.50L728.0,54.09L728.5,54.65L729.0,55.17L729.5,55.62L730.0,55.99L730.5,56.27L731.0,56.44L731.5,56.50L732.0,56.44L732.5,56.27L733.0,55.99L733.5,55.62L734.0,55.17L734.5,54.65L735.0,54.09L735.5,53.50L736.0,52.91L736.5,52.35L737.0,51.83L737.5,51.38L738.0,51.01L738.5,50.73L739.0,50.56L739.5,50.50L740.0,50.56L740.5,50.73L741.0,51.01L741.5,51.38L742.0,51.83L742.5,52.35L743.0,52.91L743.5,53.50L744.0,54.09L744.5,54.65L745.0,55.17L745.5,55.62L746.0,55.99L746.5,56.27L747.0,56.44L747.5,56.50L748.0,56.44L748.5,56.27L749.0,55.99L749.5,55.62L750.0,55.17L750.5,54.65L751.0,54.09L751.5,53.50L752.0,52.91L752.5,52.35L753.0,51.83L753.5,51.38L754.0,51.01L754.5,50.73L755.0,50.56L755.5,50.50L756.0,50.56L756.5,50.73L757.0,51.01L757.5,51.38L758.0,51.83L758.5,52.35L759.0,52.91L759.5,53.50L760.0,54.09L760.5,54.65L761.0,55.17L761.5,55.62L762.0,55.99L762.5,56.27L763.0,56.44L763.5,56.50L764.0,56.44L764.5,56.27L765.0,55.99L765.5,55.62L766.0,55.17L766.5,54.65L767.0,54.09L767.5,53.50L768.0,52.91L768.5,52.35L769.0,51.83L769.5,51.38L770.0,51.01L770.5,50.73L771.0,50.56L771.5,50.50L772.0,50.56L772.5,50.73L773.0,51.01L773.5,51.38L774.0,51.83L774.5,52.35L775.0,52.91L775.5,53.50L776.0,54.09L776.5,54.65L777.0,55.17L777.5,55.62L778.0,55.99L778.5,56.27L779.0,56.44L779.5,56.50L780.0,56.44L780.5,56.27L781.0,55.99L781.5,55.62L782.0,55.17L782.5,54.65L783.0,54.09L783.5,53.50L784.0,52.91L784.5,52.35L785.0,51.83L785.5,51.38L786.0,51.01L786.5,50.73L787.0,50.56L787.5,50.50L788.0,50.56L788.5,50.73L789.0,51.01L789.5,51.38L790.0,51.83L790.5,52.35L791.0,52.91L791.5,53.50L792.0,54.09L792.5,54.65L793.0,55.17L793.5,55.62L794.0,55.99L794.5,56.27L795.0,56.44L795.5,56.50L796.0,56.44L796.5,56.27L797.0,55.99L797.5,55.62L798.0,55.17L798.5,54.65L799.0,54.09L799.5,53.50L800.0,52.91L800.5,52.35L801.0,51.83L801.5,51.38L802.0,51.01L802.5,50.73L803.0,50.56L803.5,50.50L804.0,50.56L804.5,50.73L805.0,51.01L805.5,51.38L806.0,51.83L806.5,52.35L807.0,52.91L807.5,53.50L808.0,54.09L808.5,54.65L809.0,55.17L809.5,55.62L810.0,55.99L810.5,56.27L811.0,56.44L811.5,56.50L812.0,56.44L812.5,56.27L813.0,55.99L813.5,55.62L814.0,55.17L814.5,54.65L815.0,54.09L815.5,53.50L816.0,52.91L816.5,52.35L817.0,51.83L817.5,51.38L818.0,51.01L818.5,50.73L819.0,50.56L819.5,50.50L820.0,50.56L820.5,50.73L821.0,51.01L821.5,51.38L822.0,51.83L822.5,52.35L823.0,52.91L823.5,53.50L824.0,54.09L824.5,54.65L825.0,55.17L825.5,55.62L826.0,55.99L826.5,56.27L827.0,56.44L827.5,56.50L828.0,56.44L828.5,56.27L829.0,55.99L829.5,55.62L830.0,55.17L830.5,54.65L831.0,54.09L831.5,53.50L832.0,52.91L832.5,52.35L833.0,51.83L833.5,51.38L834.0,51.01L834.5,50.73L835.0,50.56L835.5,50.50L836.0,50.56L836.5,50.73L837.0,51.01L837.5,51.38L838.0,51.83L838.5,52.35L839.0,52.91L839.5,53.50L840.0,54.09L840.5,54.65L841.0,55.17L841.5,55.62L842.0,55.99L842.5,56.27L843.0,56.44L843.5,56.50L844.0,56.44L844.5,56.27L845.0,55.99L845.5,55.62L846.0,55.17L846.5,54.65L847.0,54.09L847.5,53.50L848.0,52.91L848.5,52.35L849.0,51.83L849.5,51.38L850.0,51.01L850.5,50.73L851.0,50.56L851.5,50.50L852.0,50.56L852.5,50.73L853.0,51.01L853.5,51.38L854.0,51.83L854.5,52.35L855.0,52.91L855.5,53.50L856.0,54.09L856.5,54.65L857.0,55.17L857.5,55.62L858.0,55.99L858.5,56.27L859.0,56.44L859.5,56.50L860.0,56.44L860.5,56.27L861.0,55.99L861.5,55.62L862.0,55.17L862.5,54.65L863.0,54.09L863.5,53.50L864.0,52.91L864.5,52.35L865.0,51.83L865.5,51.38L866.0,51.01L866.5,50.73L867.0,50.56L867.5,50.50L868.0,50.56L868.5,50.73L869.0,51.01L869.5,51.38L870.0,51.83L870.5,52.35L871.0,52.91L871.5,53.50L872.0,54.09L872.5,54.65L873.0,55.17L873.5,55.62L874.0,55.99L874.5,56.27L875.0,56.44L875.5,56.50L876.0,56.44L876.5,56.27L877.0,55.99L877.5,55.62L878.0,55.17L878.5,54.65L879.0,54.09L879.5,53.50L880.0,52.91L880.5,52.35L881.0,51.83L881.5,51.38L882.0,51.01L882.5,50.73L883.0,50.56L883.5,50.50L884.0,50.56L884.5,50.73L885.0,51.01L885.5,51.38L886.0,51.83L886.5,52.35L887.0,52.91L887.5,53.50L888.0,54.09L888.5,54.65L889.0,55.17L889.5,55.62L890.0,55.99L890.5,56.27L891.0,56.44L891.5,56.50L892.0,56.44L892.5,56.27L893.0,55.99L893.5,55.62L894.0,55.17L894.5,54.65L895.0,54.09L895.5,53.50L896.0,52.91L896.5,52.35L897.0,51.83L897.5,51.38L898.0,51.01L898.5,50.73L899.0,50.56L899.5,50.50L900.0,50.56L900.5,50.73L901.0,51.01L901.5,51.38L902.0,51.83L902.5,52.35L903.0,52.91L903.5,53.50L904.0,54.09L904.5,54.65L905.0,55.17L905.5,55.62L906.0,55.99L906.5,56.27L907.0,56.44L907.5,56.50L908.0,56.44L908.5,56.27L909.0,55.99L909.5,55.62L910.0,55.17L910.5,54.65L911.0,54.09L911.5,53.50L912.0,52.91L912.5,52.35L913.0,51.83L913.5,51.38L914.0,51.01L914.5,50.73L915.0,50.56L915.5,50.50L916.0,50.56L916.5,50.73L917.0,51.01L917.5,51.38L918.0,51.83L918.5,52.35L919.0,52.91L919.5,53.50L920.0,54.09L920.5,54.65L921.0,55.17L921.5,55.62L922.0,55.99L922.5,56.27L923.0,56.44L923.5,56.50L924.0,56.44L924.5,56.27L925.0,55.99L925.5,55.62L926.0,55.17L926.5,54.65L927.0,54.09L927.5,53.50L928.0,52.91L928.5,52.35L929.0,51.83L929.5,51.38L930.0,51.01L930.5,50.73L931.0,50.56L931.5,50.50L932.0,50.56L932.5,50.73L933.0,51.01L933.5,51.38L934.0,51.83L934.5,52.35L935.0,52.91L935.5,53.50L936.0,54.09L936.5,54.65L937.0,55.17L937.5,55.62L938.0,55.99L938.5,56.27L939.0,56.44L939.5,56.50L940.0,56.44L940.5,56.27L941.0,55.99L941.5,55.62L942.0,55.17L942.5,54.65L943.0,54.09L943.5,53.50L944.0,52.91L944.5,52.35L945.0,51.83L945.5,51.38L946.0,51.01L946.5,50.73L947.0,50.56L947.5,50.50L948.0,50.56L948.5,50.73L949.0,51.01L949.5,51.38L950.0,51.83L950.5,52.35L951.0,52.91L951.5,53.50L952.0,54.09L952.5,54.65L953.0,55.17L953.5,55.62L954.0,55.99L954.5,56.27L955.0,56.44L955.5,56.50L956.0,56.44L956.5,56.27L957.0,55.99L957.5,55.62L958.0,55.17L958.5,54.65L959.0,54.09L959.5,53.50L960.0,52.91L960.5,52.35L961.0,51.83" /><path d="M0.0,272.81L0.5,272.25L1.0,271.73L1.5,271.28L2.0,270.91L2.5,270.63L3.0,270.46L3.5,270.40L4.0,270.46L4.5,270.63L5.0,270.91L5.5,271.28L6.0,271.73L6.5,272.25L7.0,272.81L7.5,273.40L8.0,273.99L8.5,274.55L9.0,275.07L9.5,275.52L10.0,275.89L10.5,276.17L11.0,276.34L11.5,276.40L12.0,276.34L12.5,276.17L13.0,275.89L13.5,275.52L14.0,275.07L14.5,274.55L15.0,273.99L15.5,273.40L16.0,272.81L16.5,272.25L17.0,271.73L17.5,271.28L18.0,270.91L18.5,270.63L19.0,270.46L19.5,270.40L20.0,270.46L20.5,270.63L21.0,270.91L21.5,271.28L22.0,271.73L22.5,272.25L23.0,272.81L23.5,273.40L24.0,273.99L24.5,274.55L25.0,275.07L25.5,275.52L26.0,275.89L26.5,276.17L27.0,276.34L27.5,276.40L28.0,276.34L28.5,276.17L29.0,275.89L29.5,275.52L30.0,275.07L30.5,274.55L31.0,273.99L31.5,273.40L32.0,272.81L32.5,272.25L33.0,271.73L33.5,271.28L34.0,270.91L34.5,270.63L35.0,270.46L35.5,270.40L36.0,270.46L36.5,270.63L37.0,270.91L37.5,271.28L38.0,271.73L38.5,272.25L39.0,272.81L39.5,273.40L40.0,273.99L40.5,274.55L41.0,275.07L41.5,275.52L42.0,275.89L42.5,276.17L43.0,276.34L43.5,276.40L44.0,276.34L44.5,276.17L45.0,275.89L45.5,275.52L46.0,275.07L46.5,274.55L47.0,273.99L47.5,273.40L48.0,272.81L48.5,272.25L49.0,271.73L49.5,271.28L50.0,270.91L50.5,270.63L51.0,270.46L51.5,270.40L52.0,270.46L52.5,270.63L53.0,270.91L53.5,271.28L54.0,271.73L54.5,272.25L55.0,272.81L55.5,273.40L56.0,273.99L56.5,274.55L57.0,275.07L57.5,275.52L58.0,275.89L58.5,276.17L59.0,276.34L59.5,276.40L60.0,276.34L60.5,276.17L61.0,275.89L61.5,275.52L62.0,275.07L62.5,274.55L63.0,273.99L63.5,273.40L64.0,272.81L64.5,272.25L65.0,271.73L65.5,271.28L66.0,270.91L66.5,270.63L67.0,270.46L67.5,270.40L68.0,270.46L68.5,270.63L69.0,270.91L69.5,271.28L70.0,271.73L70.5,272.25L71.0,272.81L71.5,273.40L72.0,273.99L72.5,274.55L73.0,275.07L73.5,275.52L74.0,275.89L74.5,276.17L75.0,276.34"/><path d="M439.0,272.81L439.5,273.40L440.0,273.99L440.5,274.55L441.0,275.07L441.5,275.52L442.0,275.89L442.5,276.17L443.0,276.34L443.5,276.40L444.0,276.34L444.5,276.17L445.0,275.89L445.5,275.52L446.0,275.07L446.5,274.55L447.0,273.99L447.5,273.40L448.0,272.81L448.5,272.25L449.0,271.73L449.5,271.28L450.0,270.91L450.5,270.63L451.0,270.46L451.5,270.40L452.0,270.46L452.5,270.63L453.0,270.91L453.5,271.28L454.0,271.73L454.5,272.25L455.0,272.81L455.5,273.40L456.0,273.99L456.5,274.55L457.0,275.07L457.5,275.52L458.0,275.89L458.5,276.17L459.0,276.34L459.5,276.40L460.0,276.34L460.5,276.17L461.0,275.89L461.5,275.52L462.0,275.07L462.5,274.55L463.0,273.99L463.5,273.40L464.0,272.81L464.5,272.25L465.0,271.73L465.5,271.28L466.0,270.91L466.5,270.63L467.0,270.46L467.5,270.40L468.0,270.46L468.5,270.63L469.0,270.91L469.5,271.28L470.0,271.73L470.5,272.25L471.0,272.81L471.5,273.40L472.0,273.99L472.5,274.55L473.0,275.07L473.5,275.52L474.0,275.89L474.5,276.17L475.0,276.34L475.5,276.40L476.0,276.34L476.5,276.17L477.0,275.89L477.5,275.52L478.0,275.07L478.5,274.55L479.0,273.99L479.5,273.40L480.0,272.81L480.5,272.25L481.0,271.73L481.5,271.28L482.0,270.91L482.5,270.63L483.0,270.46L483.5,270.40L484.0,270.46L484.5,270.63L485.0,270.91L485.5,271.28L486.0,271.73L486.5,272.25L487.0,272.81L487.5,273.40L488.0,273.99L488.5,274.55L489.0,275.07L489.5,275.52L490.0,275.89L490.5,276.17L491.0,276.34L491.5,276.40L492.0,276.34L492.5,276.17L493.0,275.89L493.5,275.52L494.0,275.07L494.5,274.55L495.0,273.99L495.5,273.40L496.0,272.81L496.5,272.25L497.0,271.73L497.5,271.28L498.0,270.91L498.5,270.63L499.0,270.46L499.5,270.40L500.0,270.46L500.5,270.63L501.0,270.91L501.5,271.28L502.0,271.73L502.5,272.25L503.0,272.81L503.5,273.40L504.0,273.99L504.5,274.55L505.0,275.07L505.5,275.52L506.0,275.89L506.5,276.17L507.0,276.34L507.5,276.40L508.0,276.34L508.5,276.17L509.0,275.89L509.5,275.52L510.0,275.07L510.5,274.55L511.0,273.99L511.5,273.40L512.0,272.81L512.5,272.25L513.0,271.73L513.5,271.28L514.0,270.91L514.5,270.63L515.0,270.46L515.5,270.40L516.0,270.46L516.5,270.63L517.0,270.91L517.5,271.28L518.0,271.73L518.5,272.25L519.0,272.81L519.5,273.40L520.0,273.99L520.5,274.55L521.0,275.07L521.5,275.52L522.0,275.89L522.5,276.17L523.0,276.34L523.5,276.40L524.0,276.34L524.5,276.17L525.0,275.89L525.5,275.52L526.0,275.07L526.5,274.55L527.0,273.99L527.5,273.40L528.0,272.81L528.5,272.25L529.0,271.73L529.5,271.28L530.0,270.91L530.5,270.63L531.0,270.46L531.5,270.40L532.0,270.46L532.5,270.63L533.0,270.91L533.5,271.28L534.0,271.73L534.5,272.25L535.0,272.81L535.5,273.40L536.0,273.99L536.5,274.55L537.0,275.07L537.5,275.52L538.0,275.89L538.5,276.17L539.0,276.34L539.5,276.40L540.0,276.34L540.5,276.17L541.0,275.89L541.5,275.52L542.0,275.07L542.5,274.55L543.0,273.99L543.5,273.40L544.0,272.81L544.5,272.25L545.0,271.73L545.5,271.28L546.0,270.91L546.5,270.63L547.0,270.46L547.5,270.40L548.0,270.46L548.5,270.63L549.0,270.91L549.5,271.28L550.0,271.73L550.5,272.25L551.0,272.81L551.5,273.40L552.0,273.99L552.5,274.55L553.0,275.07L553.5,275.52L554.0,275.89L554.5,276.17L555.0,276.34L555.5,276.40L556.0,276.34L556.5,276.17L557.0,275.89L557.5,275.52L558.0,275.07L558.5,274.55L559.0,273.99L559.5,273.40L560.0,272.81L560.5,272.25L561.0,271.73L561.5,271.28L562.0,270.91L562.5,270.63L563.0,270.46L563.5,270.40L564.0,270.46L564.5,270.63L565.0,270.91L565.5,271.28L566.0,271.73L566.5,272.25L567.0,272.81L567.5,273.40L568.0,273.99L568.5,274.55L569.0,275.07L569.5,275.52L570.0,275.89L570.5,276.17L571.0,276.34L571.5,276.40L572.0,276.34L572.5,276.17L573.0,275.89L573.5,275.52L574.0,275.07L574.5,274.55L575.0,273.99L575.5,273.40L576.0,272.81L576.5,272.25L577.0,271.73L577.5,271.28L578.0,270.91L578.5,270.63L579.0,270.46L579.5,270.40L580.0,270.46L580.5,270.63L581.0,270.91L581.5,271.28L582.0,271.73L582.5,272.25L583.0,272.81L583.5,273.40L584.0,273.99L584.5,274.55L585.0,275.07L585.5,275.52L586.0,275.89L586.5,276.17L587.0,276.34L587.5,276.40L588.0,276.34L588.5,276.17L589.0,275.89L589.5,275.52L590.0,275.07L590.5,274.55L591.0,273.99L591.5,273.40L592.0,272.81L592.5,272.25L593.0,271.73L593.5,271.28L594.0,270.91L594.5,270.63L595.0,270.46L595.5,270.40L596.0,270.46L596.5,270.63L597.0,270.91L597.5,271.28L598.0,271.73L598.5,272.25L599.0,272.81L599.5,273.40L600.0,273.99L600.5,274.55L601.0,275.07L601.5,275.52L602.0,275.89L602.5,276.17L603.0,276.34L603.5,276.40L604.0,276.34L604.5,276.17L605.0,275.89L605.5,275.52L606.0,275.07L606.5,274.55L607.0,273.99L607.5,273.40L608.0,272.81L608.5,272.25L609.0,271.73L609.5,271.28L610.0,270.91L610.5,270.63L611.0,270.46L611.5,270.40L612.0,270.46L612.5,270.63L613.0,270.91L613.5,271.28L614.0,271.73L614.5,272.25L615.0,272.81L615.5,273.40L616.0,273.99L616.5,274.55L617.0,275.07L617.5,275.52L618.0,275.89L618.5,276.17L619.0,276.34L619.5,276.40L620.0,276.34L620.5,276.17L621.0,275.89L621.5,275.52L622.0,275.07L622.5,274.55L623.0,273.99L623.5,273.40L624.0,272.81L624.5,272.25L625.0,271.73L625.5,271.28L626.0,270.91L626.5,270.63L627.0,270.46L627.5,270.40L628.0,270.46L628.5,270.63L629.0,270.91L629.5,271.28L630.0,271.73L630.5,272.25L631.0,272.81L631.5,273.40L632.0,273.99L632.5,274.55L633.0,275.07L633.5,275.52L634.0,275.89L634.5,276.17L635.0,276.34L635.5,276.40L636.0,276.34L636.5,276.17L637.0,275.89L637.5,275.52L638.0,275.07L638.5,274.55L639.0,273.99L639.5,273.40L640.0,272.81L640.5,272.25L641.0,271.73L641.5,271.28L642.0,270.91L642.5,270.63L643.0,270.46L643.5,270.40L644.0,270.46L644.5,270.63L645.0,270.91L645.5,271.28L646.0,271.73L646.5,272.25L647.0,272.81L647.5,273.40L648.0,273.99L648.5,274.55L649.0,275.07L649.5,275.52L650.0,275.89L650.5,276.17L651.0,276.34L651.5,276.40L652.0,276.34L652.5,276.17L653.0,275.89L653.5,275.52L654.0,275.07L654.5,274.55L655.0,273.99L655.5,273.40L656.0,272.81L656.5,272.25L657.0,271.73L657.5,271.28L658.0,270.91L658.5,270.63L659.0,270.46L659.5,270.40L660.0,270.46L660.5,270.63L661.0,270.91L661.5,271.28L662.0,271.73L662.5,272.25L663.0,272.81L663.5,273.40L664.0,273.99L664.5,274.55L665.0,275.07L665.5,275.52L666.0,275.89L666.5,276.17L667.0,276.34L667.5,276.40L668.0,276.34L668.5,276.17L669.0,275.89L669.5,275.52L670.0,275.07L670.5,274.55L671.0,273.99L671.5,273.40L672.0,272.81L672.5,272.25L673.0,271.73L673.5,271.28L674.0,270.91L674.5,270.63L675.0,270.46L675.5,270.40L676.0,270.46L676.5,270.63L677.0,270.91L677.5,271.28L678.0,271.73L678.5,272.25L679.0,272.81L679.5,273.40L680.0,273.99L680.5,274.55L681.0,275.07L681.5,275.52L682.0,275.89L682.5,276.17L683.0,276.34L683.5,276.40L684.0,276.34L684.5,276.17L685.0,275.89L685.5,275.52L686.0,275.07L686.5,274.55L687.0,273.99L687.5,273.40L688.0,272.81L688.5,272.25L689.0,271.73L689.5,271.28L690.0,270.91L690.5,270.63L691.0,270.46L691.5,270.40L692.0,270.46L692.5,270.63L693.0,270.91L693.5,271.28L694.0,271.73L694.5,272.25L695.0,272.81L695.5,273.40L696.0,273.99L696.5,274.55L697.0,275.07L697.5,275.52L698.0,275.89L698.5,276.17L699.0,276.34L699.5,276.40L700.0,276.34L700.5,276.17L701.0,275.89L701.5,275.52L702.0,275.07L702.5,274.55L703.0,273.99L703.5,273.40L704.0,272.81L704.5,272.25L705.0,271.73L705.5,271.28L706.0,270.91L706.5,270.63L707.0,270.46L707.5,270.40L708.0,270.46L708.5,270.63L709.0,270.91L709.5,271.28L710.0,271.73L710.5,272.25L711.0,272.81L711.5,273.40L712.0,273.99L712.5,274.55L713.0,275.07L713.5,275.52L714.0,275.89L714.5,276.17L715.0,276.34L715.5,276.40L716.0,276.34L716.5,276.17L717.0,275.89L717.5,275.52L718.0,275.07L718.5,274.55L719.0,273.99L719.5,273.40L720.0,272.81L720.5,272.25L721.0,271.73L721.5,271.28L722.0,270.91L722.5,270.63L723.0,270.46L723.5,270.40L724.0,270.46L724.5,270.63L725.0,270.91L725.5,271.28L726.0,271.73L726.5,272.25L727.0,272.81L727.5,273.40L728.0,273.99L728.5,274.55L729.0,275.07L729.5,275.52L730.0,275.89L730.5,276.17L731.0,276.34L731.5,276.40L732.0,276.34L732.5,276.17L733.0,275.89L733.5,275.52L734.0,275.07L734.5,274.55L735.0,273.99L735.5,273.40L736.0,272.81L736.5,272.25L737.0,271.73L737.5,271.28L738.0,270.91L738.5,270.63L739.0,270.46L739.5,270.40L740.0,270.46L740.5,270.63L741.0,270.91L741.5,271.28L742.0,271.73L742.5,272.25L743.0,272.81L743.5,273.40L744.0,273.99L744.5,274.55L745.0,275.07L745.5,275.52L746.0,275.89L746.5,276.17L747.0,276.34L747.5,276.40L748.0,276.34L748.5,276.17L749.0,275.89L749.5,275.52L750.0,275.07L750.5,274.55L751.0,273.99L751.5,273.40L752.0,272.81L752.5,272.25L753.0,271.73L753.5,271.28L754.0,270.91L754.5,270.63L755.0,270.46L755.5,270.40L756.0,270.46L756.5,270.63L757.0,270.91L757.5,271.28L758.0,271.73L758.5,272.25L759.0,272.81L759.5,273.40L760.0,273.99L760.5,274.55L761.0,275.07L761.5,275.52L762.0,275.89L762.5,276.17L763.0,276.34L763.5,276.40L764.0,276.34L764.5,276.17L765.0,275.89L765.5,275.52L766.0,275.07L766.5,274.55L767.0,273.99L767.5,273.40L768.0,272.81L768.5,272.25L769.0,271.73L769.5,271.28L770.0,270.91L770.5,270.63L771.0,270.46L771.5,270.40L772.0,270.46L772.5,270.63L773.0,270.91L773.5,271.28L774.0,271.73L774.5,272.25L775.0,272.81L775.5,273.40L776.0,273.99L776.5,274.55L777.0,275.07L777.5,275.52L778.0,275.89L778.5,276.17L779.0,276.34L779.5,276.40L780.0,276.34L780.5,276.17L781.0,275.89L781.5,275.52L782.0,275.07L782.5,274.55L783.0,273.99L783.5,273.40L784.0,272.81L784.5,272.25L785.0,271.73L785.5,271.28L786.0,270.91L786.5,270.63L787.0,270.46L787.5,270.40L788.0,270.46L788.5,270.63L789.0,270.91L789.5,271.28L790.0,271.73L790.5,272.25L791.0,272.81L791.5,273.40L792.0,273.99L792.5,274.55L793.0,275.07L793.5,275.52L794.0,275.89L794.5,276.17L795.0,276.34L795.5,276.40L796.0,276.34L796.5,276.17L797.0,275.89L797.5,275.52L798.0,275.07L798.5,274.55L799.0,273.99L799.5,273.40L800.0,272.81L800.5,272.25L801.0,271.73L801.5,271.28L802.0,270.91L802.5,270.63L803.0,270.46L803.5,270.40L804.0,270.46L804.5,270.63L805.0,270.91L805.5,271.28L806.0,271.73L806.5,272.25L807.0,272.81L807.5,273.40L808.0,273.99L808.5,274.55L809.0,275.07L809.5,275.52L810.0,275.89L810.5,276.17L811.0,276.34L811.5,276.40L812.0,276.34L812.5,276.17L813.0,275.89L813.5,275.52L814.0,275.07L814.5,274.55L815.0,273.99L815.5,273.40L816.0,272.81L816.5,272.25L817.0,271.73L817.5,271.28L818.0,270.91L818.5,270.63L819.0,270.46L819.5,270.40L820.0,270.46L820.5,270.63L821.0,270.91L821.5,271.28L822.0,271.73L822.5,272.25L823.0,272.81L823.5,273.40L824.0,273.99L824.5,274.55L825.0,275.07L825.5,275.52L826.0,275.89L826.5,276.17L827.0,276.34L827.5,276.40L828.0,276.34L828.5,276.17L829.0,275.89L829.5,275.52L830.0,275.07L830.5,274.55L831.0,273.99L831.5,273.40L832.0,272.81L832.5,272.25L833.0,271.73L833.5,271.28L834.0,270.91L834.5,270.63L835.0,270.46L835.5,270.40L836.0,270.46L836.5,270.63L837.0,270.91L837.5,271.28L838.0,271.73L838.5,272.25L839.0,272.81L839.5,273.40L840.0,273.99L840.5,274.55L841.0,275.07L841.5,275.52L842.0,275.89L842.5,276.17L843.0,276.34L843.5,276.40L844.0,276.34L844.5,276.17L845.0,275.89L845.5,275.52L846.0,275.07L846.5,274.55L847.0,273.99L847.5,273.40L848.0,272.81L848.5,272.25L849.0,271.73L849.5,271.28L850.0,270.91L850.5,270.63L851.0,270.46L851.5,270.40L852.0,270.46L852.5,270.63L853.0,270.91L853.5,271.28L854.0,271.73L854.5,272.25L855.0,272.81L855.5,273.40L856.0,273.99L856.5,274.55L857.0,275.07L857.5,275.52L858.0,275.89L858.5,276.17L859.0,276.34L859.5,276.40L860.0,276.34L860.5,276.17L861.0,275.89L861.5,275.52L862.0,275.07L862.5,274.55L863.0,273.99L863.5,273.40L864.0,272.81L864.5,272.25L865.0,271.73L865.5,271.28L866.0,270.91L866.5,270.63L867.0,270.46L867.5,270.40L868.0,270.46L868.5,270.63L869.0,270.91L869.5,271.28L870.0,271.73L870.5,272.25L871.0,272.81L871.5,273.40L872.0,273.99L872.5,274.55L873.0,275.07L873.5,275.52L874.0,275.89L874.5,276.17L875.0,276.34L875.5,276.40L876.0,276.34L876.5,276.17L877.0,275.89L877.5,275.52L878.0,275.07L878.5,274.55L879.0,273.99L879.5,273.40L880.0,272.81L880.5,272.25L881.0,271.73L881.5,271.28L882.0,270.91L882.5,270.63L883.0,270.46L883.5,270.40L884.0,270.46L884.5,270.63L885.0,270.91L885.5,271.28L886.0,271.73L886.5,272.25L887.0,272.81L887.5,273.40L888.0,273.99L888.5,274.55L889.0,275.07L889.5,275.52L890.0,275.89L890.5,276.17L891.0,276.34L891.5,276.40L892.0,276.34L892.5,276.17L893.0,275.89L893.5,275.52L894.0,275.07L894.5,274.55L895.0,273.99L895.5,273.40L896.0,272.81L896.5,272.25L897.0,271.73L897.5,271.28L898.0,270.91L898.5,270.63L899.0,270.46L899.5,270.40L900.0,270.46L900.5,270.63L901.0,270.91L901.5,271.28L902.0,271.73L902.5,272.25L903.0,272.81L903.5,273.40L904.0,273.99L904.5,274.55L905.0,275.07L905.5,275.52L906.0,275.89L906.5,276.17L907.0,276.34L907.5,276.40L908.0,276.34L908.5,276.17L909.0,275.89L909.5,275.52L910.0,275.07L910.5,274.55L911.0,273.99L911.5,273.40L912.0,272.81L912.5,272.25L913.0,271.73L913.5,271.28L914.0,270.91L914.5,270.63L915.0,270.46L915.5,270.40L916.0,270.46L916.5,270.63L917.0,270.91L917.5,271.28L918.0,271.73L918.5,272.25L919.0,272.81L919.5,273.40L920.0,273.99L920.5,274.55L921.0,275.07L921.5,275.52L922.0,275.89L922.5,276.17L923.0,276.34L923.5,276.40L924.0,276.34L924.5,276.17L925.0,275.89L925.5,275.52L926.0,275.07L926.5,274.55L927.0,273.99L927.5,273.40L928.0,272.81L928.5,272.25L929.0,271.73L929.5,271.28L930.0,270.91L930.5,270.63L931.0,270.46L931.5,270.40L932.0,270.46L932.5,270.63L933.0,270.91L933.5,271.28L934.0,271.73L934.5,272.25L935.0,272.81L935.5,273.40L936.0,273.99L936.5,274.55L937.0,275.07L937.5,275.52L938.0,275.89L938.5,276.17L939.0,276.34L939.5,276.40L940.0,276.34L940.5,276.17L941.0,275.89L941.5,275.52L942.0,275.07L942.5,274.55L943.0,273.99L943.5,273.40L944.0,272.81L944.5,272.25L945.0,271.73L945.5,271.28L946.0,270.91L946.5,270.63L947.0,270.46L947.5,270.40L948.0,270.46L948.5,270.63L949.0,270.91L949.5,271.28L950.0,271.73L950.5,272.25L951.0,272.81L951.5,273.40L952.0,273.99L952.5,274.55L953.0,275.07L953.5,275.52L954.0,275.89L954.5,276.17L955.0,276.34L955.5,276.40L956.0,276.34L956.5,276.17L957.0,275.89L957.5,275.52L958.0,275.07L958.5,274.55L959.0,273.99L959.5,273.40L960.0,272.81L960.5,272.25L961.0,271.73"/><path d="M0.0,514.81L0.5,514.25L1.0,513.73L1.5,513.28L2.0,512.91L2.5,512.63L3.0,512.46L3.5,512.40L4.0,512.46L4.5,512.63L5.0,512.91L5.5,513.28L6.0,513.73L6.5,514.25L7.0,514.81L7.5,515.40L8.0,515.99L8.5,516.55L9.0,517.07L9.5,517.52L10.0,517.89L10.5,518.17L11.0,518.34L11.5,518.40L12.0,518.34L12.5,518.17L13.0,517.89L13.5,517.52L14.0,517.07L14.5,516.55L15.0,515.99L15.5,515.40L16.0,514.81L16.5,514.25L17.0,513.73L17.5,513.28L18.0,512.91L18.5,512.63L19.0,512.46L19.5,512.40L20.0,512.46L20.5,512.63L21.0,512.91L21.5,513.28L22.0,513.73L22.5,514.25L23.0,514.81L23.5,515.40L24.0,515.99L24.5,516.55L25.0,517.07L25.5,517.52L26.0,517.89L26.5,518.17L27.0,518.34L27.5,518.40L28.0,518.34L28.5,518.17L29.0,517.89L29.5,517.52L30.0,517.07L30.5,516.55L31.0,515.99L31.5,515.40L32.0,514.81L32.5,514.25L33.0,513.73L33.5,513.28L34.0,512.91L34.5,512.63L35.0,512.46L35.5,512.40L36.0,512.46L36.5,512.63L37.0,512.91L37.5,513.28L38.0,513.73L38.5,514.25L39.0,514.81L39.5,515.40L40.0,515.99L40.5,516.55L41.0,517.07L41.5,517.52L42.0,517.89L42.5,518.17L43.0,518.34L43.5,518.40L44.0,518.34L44.5,518.17L45.0,517.89L45.5,517.52L46.0,517.07L46.5,516.55L47.0,515.99L47.5,515.40L48.0,514.81L48.5,514.25L49.0,513.73L49.5,513.28L50.0,512.91L50.5,512.63L51.0,512.46L51.5,512.40L52.0,512.46L52.5,512.63L53.0,512.91L53.5,513.28L54.0,513.73L54.5,514.25L55.0,514.81L55.5,515.40L56.0,515.99L56.5,516.55L57.0,517.07L57.5,517.52L58.0,517.89L58.5,518.17L59.0,518.34L59.5,518.40L60.0,518.34L60.5,518.17L61.0,517.89L61.5,517.52L62.0,517.07L62.5,516.55L63.0,515.99L63.5,515.40L64.0,514.81L64.5,514.25L65.0,513.73L65.5,513.28L66.0,512.91L66.5,512.63L67.0,512.46L67.5,512.40L68.0,512.46L68.5,512.63L69.0,512.91L69.5,513.28L70.0,513.73L70.5,514.25L71.0,514.81L71.5,515.40L72.0,515.99L72.5,516.55L73.0,517.07L73.5,517.52L74.0,517.89L74.5,518.17L75.0,518.34"/><path d="M439.0,514.81L439.5,515.40L440.0,515.99L440.5,516.55L441.0,517.07L441.5,517.52L442.0,517.89L442.5,518.17L443.0,518.34L443.5,518.40L444.0,518.34L444.5,518.17L445.0,517.89L445.5,517.52L446.0,517.07L446.5,516.55L447.0,515.99L447.5,515.40L448.0,514.81L448.5,514.25L449.0,513.73L449.5,513.28L450.0,512.91L450.5,512.63L451.0,512.46L451.5,512.40L452.0,512.46L452.5,512.63L453.0,512.91L453.5,513.28L454.0,513.73L454.5,514.25L455.0,514.81L455.5,515.40L456.0,515.99L456.5,516.55L457.0,517.07L457.5,517.52L458.0,517.89L458.5,518.17L459.0,518.34L459.5,518.40L460.0,518.34L460.5,518.17L461.0,517.89L461.5,517.52L462.0,517.07L462.5,516.55L463.0,515.99L463.5,515.40L464.0,514.81L464.5,514.25L465.0,513.73L465.5,513.28L466.0,512.91L466.5,512.63L467.0,512.46L467.5,512.40L468.0,512.46L468.5,512.63L469.0,512.91L469.5,513.28L470.0,513.73L470.5,514.25L471.0,514.81L471.5,515.40L472.0,515.99L472.5,516.55L473.0,517.07L473.5,517.52L474.0,517.89L474.5,518.17L475.0,518.34L475.5,518.40L476.0,518.34L476.5,518.17L477.0,517.89L477.5,517.52L478.0,517.07L478.5,516.55L479.0,515.99L479.5,515.40L480.0,514.81L480.5,514.25L481.0,513.73L481.5,513.28L482.0,512.91L482.5,512.63L483.0,512.46L483.5,512.40L484.0,512.46L484.5,512.63L485.0,512.91L485.5,513.28L486.0,513.73L486.5,514.25L487.0,514.81L487.5,515.40L488.0,515.99L488.5,516.55L489.0,517.07L489.5,517.52L490.0,517.89L490.5,518.17L491.0,518.34L491.5,518.40L492.0,518.34L492.5,518.17L493.0,517.89L493.5,517.52L494.0,517.07L494.5,516.55L495.0,515.99L495.5,515.40L496.0,514.81L496.5,514.25L497.0,513.73L497.5,513.28L498.0,512.91L498.5,512.63L499.0,512.46L499.5,512.40L500.0,512.46L500.5,512.63L501.0,512.91L501.5,513.28L502.0,513.73L502.5,514.25L503.0,514.81L503.5,515.40L504.0,515.99L504.5,516.55L505.0,517.07L505.5,517.52L506.0,517.89L506.5,518.17L507.0,518.34L507.5,518.40L508.0,518.34L508.5,518.17L509.0,517.89L509.5,517.52L510.0,517.07L510.5,516.55L511.0,515.99L511.5,515.40L512.0,514.81L512.5,514.25L513.0,513.73L513.5,513.28L514.0,512.91L514.5,512.63L515.0,512.46L515.5,512.40L516.0,512.46L516.5,512.63L517.0,512.91L517.5,513.28L518.0,513.73L518.5,514.25L519.0,514.81L519.5,515.40L520.0,515.99L520.5,516.55L521.0,517.07L521.5,517.52L522.0,517.89L522.5,518.17L523.0,518.34L523.5,518.40L524.0,518.34L524.5,518.17L525.0,517.89L525.5,517.52L526.0,517.07L526.5,516.55L527.0,515.99L527.5,515.40L528.0,514.81L528.5,514.25L529.0,513.73L529.5,513.28L530.0,512.91L530.5,512.63L531.0,512.46L531.5,512.40L532.0,512.46L532.5,512.63L533.0,512.91L533.5,513.28L534.0,513.73L534.5,514.25L535.0,514.81L535.5,515.40L536.0,515.99L536.5,516.55L537.0,517.07L537.5,517.52L538.0,517.89L538.5,518.17L539.0,518.34L539.5,518.40L540.0,518.34L540.5,518.17L541.0,517.89L541.5,517.52L542.0,517.07L542.5,516.55L543.0,515.99L543.5,515.40L544.0,514.81L544.5,514.25L545.0,513.73L545.5,513.28L546.0,512.91L546.5,512.63L547.0,512.46L547.5,512.40L548.0,512.46L548.5,512.63L549.0,512.91L549.5,513.28L550.0,513.73L550.5,514.25L551.0,514.81L551.5,515.40L552.0,515.99L552.5,516.55L553.0,517.07L553.5,517.52L554.0,517.89L554.5,518.17L555.0,518.34L555.5,518.40L556.0,518.34L556.5,518.17L557.0,517.89L557.5,517.52L558.0,517.07L558.5,516.55L559.0,515.99L559.5,515.40L560.0,514.81L560.5,514.25L561.0,513.73L561.5,513.28L562.0,512.91L562.5,512.63L563.0,512.46L563.5,512.40L564.0,512.46L564.5,512.63L565.0,512.91L565.5,513.28L566.0,513.73L566.5,514.25L567.0,514.81L567.5,515.40L568.0,515.99L568.5,516.55L569.0,517.07L569.5,517.52L570.0,517.89L570.5,518.17L571.0,518.34L571.5,518.40L572.0,518.34L572.5,518.17L573.0,517.89L573.5,517.52L574.0,517.07L574.5,516.55L575.0,515.99L575.5,515.40L576.0,514.81L576.5,514.25L577.0,513.73L577.5,513.28L578.0,512.91L578.5,512.63L579.0,512.46L579.5,512.40L580.0,512.46L580.5,512.63L581.0,512.91L581.5,513.28L582.0,513.73L582.5,514.25L583.0,514.81L583.5,515.40L584.0,515.99L584.5,516.55L585.0,517.07L585.5,517.52L586.0,517.89L586.5,518.17L587.0,518.34L587.5,518.40L588.0,518.34L588.5,518.17L589.0,517.89L589.5,517.52L590.0,517.07L590.5,516.55L591.0,515.99L591.5,515.40L592.0,514.81L592.5,514.25L593.0,513.73L593.5,513.28L594.0,512.91L594.5,512.63L595.0,512.46L595.5,512.40L596.0,512.46L596.5,512.63L597.0,512.91L597.5,513.28L598.0,513.73L598.5,514.25L599.0,514.81L599.5,515.40L600.0,515.99L600.5,516.55L601.0,517.07L601.5,517.52L602.0,517.89L602.5,518.17L603.0,518.34L603.5,518.40L604.0,518.34L604.5,518.17L605.0,517.89L605.5,517.52L606.0,517.07L606.5,516.55L607.0,515.99L607.5,515.40L608.0,514.81L608.5,514.25L609.0,513.73L609.5,513.28L610.0,512.91L610.5,512.63L611.0,512.46L611.5,512.40L612.0,512.46L612.5,512.63L613.0,512.91L613.5,513.28L614.0,513.73L614.5,514.25L615.0,514.81L615.5,515.40L616.0,515.99L616.5,516.55L617.0,517.07L617.5,517.52L618.0,517.89L618.5,518.17L619.0,518.34L619.5,518.40L620.0,518.34L620.5,518.17L621.0,517.89L621.5,517.52L622.0,517.07L622.5,516.55L623.0,515.99L623.5,515.40L624.0,514.81L624.5,514.25L625.0,513.73L625.5,513.28L626.0,512.91L626.5,512.63L627.0,512.46L627.5,512.40L628.0,512.46L628.5,512.63L629.0,512.91L629.5,513.28L630.0,513.73L630.5,514.25L631.0,514.81L631.5,515.40L632.0,515.99L632.5,516.55L633.0,517.07L633.5,517.52L634.0,517.89L634.5,518.17L635.0,518.34L635.5,518.40L636.0,518.34L636.5,518.17L637.0,517.89L637.5,517.52L638.0,517.07L638.5,516.55L639.0,515.99L639.5,515.40L640.0,514.81L640.5,514.25L641.0,513.73L641.5,513.28L642.0,512.91L642.5,512.63L643.0,512.46L643.5,512.40L644.0,512.46L644.5,512.63L645.0,512.91L645.5,513.28L646.0,513.73L646.5,514.25L647.0,514.81L647.5,515.40L648.0,515.99L648.5,516.55L649.0,517.07L649.5,517.52L650.0,517.89L650.5,518.17L651.0,518.34L651.5,518.40L652.0,518.34L652.5,518.17L653.0,517.89L653.5,517.52L654.0,517.07L654.5,516.55L655.0,515.99L655.5,515.40L656.0,514.81L656.5,514.25L657.0,513.73L657.5,513.28L658.0,512.91L658.5,512.63L659.0,512.46L659.5,512.40L660.0,512.46L660.5,512.63L661.0,512.91L661.5,513.28L662.0,513.73L662.5,514.25L663.0,514.81L663.5,515.40L664.0,515.99L664.5,516.55L665.0,517.07L665.5,517.52L666.0,517.89L666.5,518.17L667.0,518.34L667.5,518.40L668.0,518.34L668.5,518.17L669.0,517.89L669.5,517.52L670.0,517.07L670.5,516.55L671.0,515.99L671.5,515.40L672.0,514.81L672.5,514.25L673.0,513.73L673.5,513.28L674.0,512.91L674.5,512.63L675.0,512.46L675.5,512.40L676.0,512.46L676.5,512.63L677.0,512.91L677.5,513.28L678.0,513.73L678.5,514.25L679.0,514.81L679.5,515.40L680.0,515.99L680.5,516.55L681.0,517.07L681.5,517.52L682.0,517.89L682.5,518.17L683.0,518.34L683.5,518.40L684.0,518.34L684.5,518.17L685.0,517.89L685.5,517.52L686.0,517.07L686.5,516.55L687.0,515.99L687.5,515.40L688.0,514.81L688.5,514.25L689.0,513.73L689.5,513.28L690.0,512.91L690.5,512.63L691.0,512.46L691.5,512.40L692.0,512.46L692.5,512.63L693.0,512.91L693.5,513.28L694.0,513.73L694.5,514.25L695.0,514.81L695.5,515.40L696.0,515.99L696.5,516.55L697.0,517.07L697.5,517.52L698.0,517.89L698.5,518.17L699.0,518.34L699.5,518.40L700.0,518.34L700.5,518.17L701.0,517.89L701.5,517.52L702.0,517.07L702.5,516.55L703.0,515.99L703.5,515.40L704.0,514.81L704.5,514.25L705.0,513.73L705.5,513.28L706.0,512.91L706.5,512.63L707.0,512.46L707.5,512.40L708.0,512.46L708.5,512.63L709.0,512.91L709.5,513.28L710.0,513.73L710.5,514.25L711.0,514.81L711.5,515.40L712.0,515.99L712.5,516.55L713.0,517.07L713.5,517.52L714.0,517.89L714.5,518.17L715.0,518.34L715.5,518.40L716.0,518.34L716.5,518.17L717.0,517.89L717.5,517.52L718.0,517.07L718.5,516.55L719.0,515.99L719.5,515.40L720.0,514.81L720.5,514.25L721.0,513.73L721.5,513.28L722.0,512.91L722.5,512.63L723.0,512.46L723.5,512.40L724.0,512.46L724.5,512.63L725.0,512.91L725.5,513.28L726.0,513.73L726.5,514.25L727.0,514.81L727.5,515.40L728.0,515.99L728.5,516.55L729.0,517.07L729.5,517.52L730.0,517.89L730.5,518.17L731.0,518.34L731.5,518.40L732.0,518.34L732.5,518.17L733.0,517.89L733.5,517.52L734.0,517.07L734.5,516.55L735.0,515.99L735.5,515.40L736.0,514.81L736.5,514.25L737.0,513.73L737.5,513.28L738.0,512.91L738.5,512.63L739.0,512.46L739.5,512.40L740.0,512.46L740.5,512.63L741.0,512.91L741.5,513.28L742.0,513.73L742.5,514.25L743.0,514.81L743.5,515.40L744.0,515.99L744.5,516.55L745.0,517.07L745.5,517.52L746.0,517.89L746.5,518.17L747.0,518.34L747.5,518.40L748.0,518.34L748.5,518.17L749.0,517.89L749.5,517.52L750.0,517.07L750.5,516.55L751.0,515.99L751.5,515.40L752.0,514.81L752.5,514.25L753.0,513.73L753.5,513.28L754.0,512.91L754.5,512.63L755.0,512.46L755.5,512.40L756.0,512.46L756.5,512.63L757.0,512.91L757.5,513.28L758.0,513.73L758.5,514.25L759.0,514.81L759.5,515.40L760.0,515.99L760.5,516.55L761.0,517.07L761.5,517.52L762.0,517.89L762.5,518.17L763.0,518.34L763.5,518.40L764.0,518.34L764.5,518.17L765.0,517.89L765.5,517.52L766.0,517.07L766.5,516.55L767.0,515.99L767.5,515.40L768.0,514.81L768.5,514.25L769.0,513.73L769.5,513.28L770.0,512.91L770.5,512.63L771.0,512.46L771.5,512.40L772.0,512.46L772.5,512.63L773.0,512.91L773.5,513.28L774.0,513.73L774.5,514.25L775.0,514.81L775.5,515.40L776.0,515.99L776.5,516.55L777.0,517.07L777.5,517.52L778.0,517.89L778.5,518.17L779.0,518.34L779.5,518.40L780.0,518.34L780.5,518.17L781.0,517.89L781.5,517.52L782.0,517.07L782.5,516.55L783.0,515.99L783.5,515.40L784.0,514.81L784.5,514.25L785.0,513.73L785.5,513.28L786.0,512.91L786.5,512.63L787.0,512.46L787.5,512.40L788.0,512.46L788.5,512.63L789.0,512.91L789.5,513.28L790.0,513.73L790.5,514.25L791.0,514.81L791.5,515.40L792.0,515.99L792.5,516.55L793.0,517.07L793.5,517.52L794.0,517.89L794.5,518.17L795.0,518.34L795.5,518.40L796.0,518.34L796.5,518.17L797.0,517.89L797.5,517.52L798.0,517.07L798.5,516.55L799.0,515.99L799.5,515.40L800.0,514.81L800.5,514.25L801.0,513.73L801.5,513.28L802.0,512.91L802.5,512.63L803.0,512.46L803.5,512.40L804.0,512.46L804.5,512.63L805.0,512.91L805.5,513.28L806.0,513.73L806.5,514.25L807.0,514.81L807.5,515.40L808.0,515.99L808.5,516.55L809.0,517.07L809.5,517.52L810.0,517.89L810.5,518.17L811.0,518.34L811.5,518.40L812.0,518.34L812.5,518.17L813.0,517.89L813.5,517.52L814.0,517.07L814.5,516.55L815.0,515.99L815.5,515.40L816.0,514.81L816.5,514.25L817.0,513.73L817.5,513.28L818.0,512.91L818.5,512.63L819.0,512.46L819.5,512.40L820.0,512.46L820.5,512.63L821.0,512.91L821.5,513.28L822.0,513.73L822.5,514.25L823.0,514.81L823.5,515.40L824.0,515.99L824.5,516.55L825.0,517.07L825.5,517.52L826.0,517.89L826.5,518.17L827.0,518.34L827.5,518.40L828.0,518.34L828.5,518.17L829.0,517.89L829.5,517.52L830.0,517.07L830.5,516.55L831.0,515.99L831.5,515.40L832.0,514.81L832.5,514.25L833.0,513.73L833.5,513.28L834.0,512.91L834.5,512.63L835.0,512.46L835.5,512.40L836.0,512.46L836.5,512.63L837.0,512.91L837.5,513.28L838.0,513.73L838.5,514.25L839.0,514.81L839.5,515.40L840.0,515.99L840.5,516.55L841.0,517.07L841.5,517.52L842.0,517.89L842.5,518.17L843.0,518.34L843.5,518.40L844.0,518.34L844.5,518.17L845.0,517.89L845.5,517.52L846.0,517.07L846.5,516.55L847.0,515.99L847.5,515.40L848.0,514.81L848.5,514.25L849.0,513.73L849.5,513.28L850.0,512.91L850.5,512.63L851.0,512.46L851.5,512.40L852.0,512.46L852.5,512.63L853.0,512.91L853.5,513.28L854.0,513.73L854.5,514.25L855.0,514.81L855.5,515.40L856.0,515.99L856.5,516.55L857.0,517.07L857.5,517.52L858.0,517.89L858.5,518.17L859.0,518.34L859.5,518.40L860.0,518.34L860.5,518.17L861.0,517.89L861.5,517.52L862.0,517.07L862.5,516.55L863.0,515.99L863.5,515.40L864.0,514.81L864.5,514.25L865.0,513.73L865.5,513.28L866.0,512.91L866.5,512.63L867.0,512.46L867.5,512.40L868.0,512.46L868.5,512.63L869.0,512.91L869.5,513.28L870.0,513.73L870.5,514.25L871.0,514.81L871.5,515.40L872.0,515.99L872.5,516.55L873.0,517.07L873.5,517.52L874.0,517.89L874.5,518.17L875.0,518.34L875.5,518.40L876.0,518.34L876.5,518.17L877.0,517.89L877.5,517.52L878.0,517.07L878.5,516.55L879.0,515.99L879.5,515.40L880.0,514.81L880.5,514.25L881.0,513.73L881.5,513.28L882.0,512.91L882.5,512.63L883.0,512.46L883.5,512.40L884.0,512.46L884.5,512.63L885.0,512.91L885.5,513.28L886.0,513.73L886.5,514.25L887.0,514.81L887.5,515.40L888.0,515.99L888.5,516.55L889.0,517.07L889.5,517.52L890.0,517.89L890.5,518.17L891.0,518.34L891.5,518.40L892.0,518.34L892.5,518.17L893.0,517.89L893.5,517.52L894.0,517.07L894.5,516.55L895.0,515.99L895.5,515.40L896.0,514.81L896.5,514.25L897.0,513.73L897.5,513.28L898.0,512.91L898.5,512.63L899.0,512.46L899.5,512.40L900.0,512.46L900.5,512.63L901.0,512.91L901.5,513.28L902.0,513.73L902.5,514.25L903.0,514.81L903.5,515.40L904.0,515.99L904.5,516.55L905.0,517.07L905.5,517.52L906.0,517.89L906.5,518.17L907.0,518.34L907.5,518.40L908.0,518.34L908.5,518.17L909.0,517.89L909.5,517.52L910.0,517.07L910.5,516.55L911.0,515.99L911.5,515.40L912.0,514.81L912.5,514.25L913.0,513.73L913.5,513.28L914.0,512.91L914.5,512.63L915.0,512.46L915.5,512.40L916.0,512.46L916.5,512.63L917.0,512.91L917.5,513.28L918.0,513.73L918.5,514.25L919.0,514.81L919.5,515.40L920.0,515.99L920.5,516.55L921.0,517.07L921.5,517.52L922.0,517.89L922.5,518.17L923.0,518.34L923.5,518.40L924.0,518.34L924.5,518.17L925.0,517.89L925.5,517.52L926.0,517.07L926.5,516.55L927.0,515.99L927.5,515.40L928.0,514.81L928.5,514.25L929.0,513.73L929.5,513.28L930.0,512.91L930.5,512.63L931.0,512.46L931.5,512.40L932.0,512.46L932.5,512.63L933.0,512.91L933.5,513.28L934.0,513.73L934.5,514.25L935.0,514.81L935.5,515.40L936.0,515.99L936.5,516.55L937.0,517.07L937.5,517.52L938.0,517.89L938.5,518.17L939.0,518.34L939.5,518.40L940.0,518.34L940.5,518.17L941.0,517.89L941.5,517.52L942.0,517.07L942.5,516.55L943.0,515.99L943.5,515.40L944.0,514.81L944.5,514.25L945.0,513.73L945.5,513.28L946.0,512.91L946.5,512.63L947.0,512.46L947.5,512.40L948.0,512.46L948.5,512.63L949.0,512.91L949.5,513.28L950.0,513.73L950.5,514.25L951.0,514.81L951.5,515.40L952.0,515.99L952.5,516.55L953.0,517.07L953.5,517.52L954.0,517.89L954.5,518.17L955.0,518.34L955.5,518.40L956.0,518.34L956.5,518.17L957.0,517.89L957.5,517.52L958.0,517.07L958.5,516.55L959.0,515.99L959.5,515.40L960.0,514.81L960.5,514.25L961.0,513.73"/></svg>
<div class="lbl" style="top:264px">\Ibexa\Migration\Generator\StepBuilder &gt; AbstractStepFactory</div>
<div class="lbl" style="top:506px">\Ibexa\Migration\Generator\StepBuilder &gt; AbstractStepFactory</div>
<div style="top:262px;left:0;position:absolute;width:60px;height:22px"><svg class="ic" width="20" height="22" viewBox="0 0 20 22"><circle cx="9.4" cy="10.8" r="4.7" fill="#fff" stroke="none"/><path d="M11.82 6.77A4.7 4.7 0 1 0 13.96 11.94" fill="none" stroke="#208a3c" stroke-width="1.15"/><path d="M8.1 8.65h2.7M8.1 13.25h2.7" stroke="#208a3c" stroke-width="1.15" fill="none"/><path d="M9.45 8.6v4.7" stroke="#208a3c" stroke-width="1.0" fill="none"/><path d="M15.45 4.6v7.3" stroke="#db3b4b" stroke-width="1.15" fill="none"/><path d="M13.4 6.7l2.05-2.2 2.05 2.2" stroke="#db3b4b" stroke-width="1.15" fill="none" stroke-linecap="round" stroke-linejoin="round"/></svg></div>
<div class="bot"></div><div class="bot2"></div>
</body></html>
